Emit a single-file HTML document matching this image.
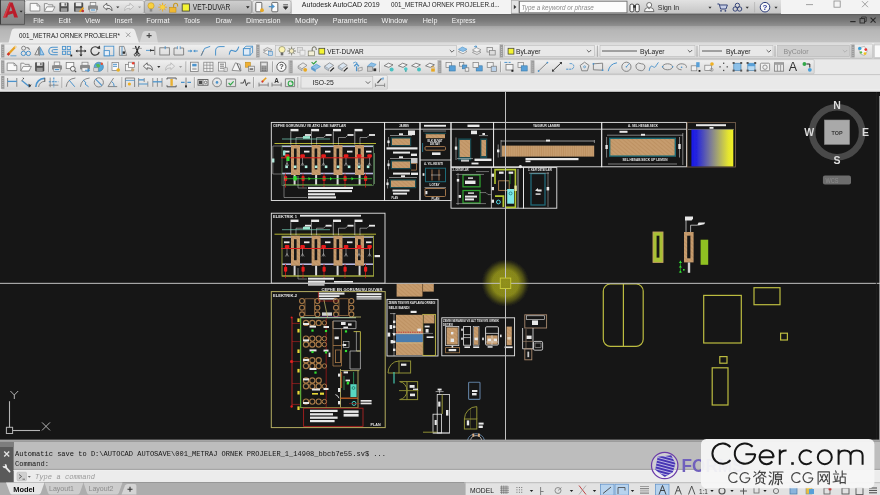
<!DOCTYPE html>
<html><head><meta charset="utf-8"><title>AutoCAD</title>
<style>html,body{margin:0;padding:0;background:#161616;overflow:hidden}svg{display:block}text{white-space:pre}</style>
</head><body>
<svg width="880" height="495" viewBox="0 0 880 495" font-family="'Liberation Sans', sans-serif">

<defs>
<linearGradient id="gQat" x1="0" y1="0" x2="0" y2="1"><stop offset="0" stop-color="#e2e2e2"/><stop offset="1" stop-color="#c4c4c4"/></linearGradient>
<linearGradient id="gQat2" x1="0" y1="0" x2="0" y2="1"><stop offset="0" stop-color="#ececec"/><stop offset="1" stop-color="#cfcfcf"/></linearGradient>
<linearGradient id="gQatD" x1="0" y1="0" x2="0" y2="1"><stop offset="0" stop-color="#cfcfcf"/><stop offset="1" stop-color="#b4b4b4"/></linearGradient>
<linearGradient id="gMenu" x1="0" y1="0" x2="0" y2="1"><stop offset="0" stop-color="#5a5a5a"/><stop offset="0.12" stop-color="#6c6c6c"/><stop offset="0.55" stop-color="#7a7a7a"/><stop offset="1" stop-color="#909090"/></linearGradient>
<linearGradient id="gTabs" x1="0" y1="0" x2="0" y2="1"><stop offset="0" stop-color="#a4a4a4"/><stop offset="0.25" stop-color="#b6b6b6"/><stop offset="1" stop-color="#c2c2c2"/></linearGradient>
<linearGradient id="gApp" x1="0" y1="0" x2="0" y2="1"><stop offset="0" stop-color="#a2a2a2"/><stop offset="0.5" stop-color="#8e8e8e"/><stop offset="1" stop-color="#848484"/></linearGradient>
<linearGradient id="gTb" x1="0" y1="0" x2="0" y2="1"><stop offset="0" stop-color="#f0f0f0"/><stop offset="1" stop-color="#d8d8d8"/></linearGradient>
<linearGradient id="gBY" x1="0" y1="0" x2="1" y2="0"><stop offset="0" stop-color="#1a1ae8"/><stop offset="0.12" stop-color="#2424dc"/><stop offset="0.5" stop-color="#86868e"/><stop offset="0.88" stop-color="#e4e430"/><stop offset="1" stop-color="#f2f226"/></linearGradient>
<radialGradient id="gGlow"><stop offset="0" stop-color="#96961a" stop-opacity="0.96"/><stop offset="0.55" stop-color="#90901a" stop-opacity="0.92"/><stop offset="0.78" stop-color="#7c7c1a" stop-opacity="0.55"/><stop offset="1" stop-color="#505018" stop-opacity="0"/></radialGradient>
<pattern id="wood" width="3" height="3" patternUnits="userSpaceOnUse" patternTransform="rotate(40)"><rect width="3" height="3" fill="#c69c6e"/><rect width="3" height="0.7" fill="#b98c5c"/></pattern>
<pattern id="woodv" width="2.2" height="4" patternUnits="userSpaceOnUse"><rect width="2.2" height="4" fill="#c69c6e"/><rect width="0.5" height="4" fill="#b78a5a"/></pattern>
<filter id="soft" x="0" y="0" width="880" height="495" filterUnits="userSpaceOnUse"><feGaussianBlur stdDeviation="0.38" edgeMode="duplicate"/></filter>
</defs>
<g filter="url(#soft)"><rect x="0.00" y="0.00" width="880.00" height="92.00" fill="#e6e6e6" />
<rect x="0.00" y="0.00" width="292.00" height="14.00" fill="url(#gQat)" />
<rect x="292.00" y="0.00" width="588.00" height="14.00" fill="#f3f3f3" />
<rect x="511.00" y="0.00" width="270.00" height="14.00" fill="url(#gQat)" />
<rect x="511.00" y="13.00" width="270.00" height="1.00" fill="#9a9a9a" />
<rect x="0.00" y="14.00" width="880.00" height="12.00" fill="url(#gMenu)" />
<rect x="0.00" y="26.00" width="880.00" height="17.00" fill="url(#gTabs)" />
<rect x="0.00" y="43.00" width="880.00" height="49.00" fill="#e9e9e9" />
<rect x="0.00" y="0.00" width="24.50" height="24.30" fill="url(#gApp)" stroke="#505050" stroke-width="0.8" />
<rect x="0.00" y="0.00" width="1.00" height="24.30" fill="#3c3c3c" />
<path d="M3.2,17.5 L9.2,2.6 L12.6,2.6 L18,17.5 L14.2,17.5 L13,13.6 L8,15.0 L7.1,17.5 Z M9.2,11.6 L12.2,10.8 L10.8,6.2 Z" fill="#bb1e2a" fill-rule="evenodd"/>
<path d="M3.2,17.5 L9.2,2.6 L10.6,2.6 L5.2,17.5 Z" fill="#d23a44" />
<path d="M19.6,10.8 l3,0 l-1.5,1.8 Z" fill="#222" />
<rect x="25.00" y="0.50" width="119.00" height="13.00" fill="url(#gQat2)" stroke="#a8a8a8" stroke-width="0.6" rx="2" />
<rect x="144.50" y="0.50" width="107.00" height="13.00" fill="url(#gQatD)" stroke="#8a8a8a" stroke-width="0.6" rx="1.5" />
<rect x="252.50" y="0.50" width="38.50" height="13.00" fill="url(#gQat2)" stroke="#a0a0a0" stroke-width="0.6" rx="2" />
<g transform="translate(35.00,7.20)"><path d="M-4.8,-3.8 L2,-3.8 L4.8,-1.2 L4.8,3.8 L-4.8,3.8 Z" fill="#fafafa" stroke="#7c7c7c" stroke-width="0.8" /><path d="M2,-3.8 L2,-1.2 L4.8,-1.2" fill="none" stroke="#7c7c7c" stroke-width="0.7" /></g>
<g transform="translate(49.40,7.20)"><path d="M-5,4.2 L-5,-3.6 L-2,-3.6 L-1,-2.4 L3.4,-2.4 L3.4,-0.4" fill="#f4f4f4" stroke="#7c7c7c" stroke-width="0.8" /><path d="M-5,4.2 L-2.6,-0.4 L5.6,-0.4 L3.2,4.2 Z" fill="#fafafa" stroke="#7c7c7c" stroke-width="0.8" /></g>
<g transform="translate(64.00,7.20)"><rect x="-4.60" y="-4.60" width="9.20" height="9.20" fill="#505050" rx="0.8" /><rect x="-2.80" y="-4.60" width="5.60" height="3.60" fill="#e8e8e8" /><rect x="-3.00" y="1.00" width="6.00" height="3.60" fill="#9a9a9a" /><rect x="0.60" y="-4.00" width="1.20" height="2.40" fill="#505050" /></g>
<g transform="translate(78.60,7.20)"><rect x="-4.60" y="-4.60" width="9.20" height="9.20" fill="#505050" rx="0.8" /><rect x="-2.80" y="-4.60" width="5.60" height="3.60" fill="#e8e8e8" /><rect x="-3.00" y="1.00" width="6.00" height="3.60" fill="#9a9a9a" /><path d="M1,4.6 L4.8,0.4" fill="none" stroke="#e8a020" stroke-width="1.8" /><circle cx="4.20" cy="3.80" r="1.30" fill="#c83030"/></g>
<g transform="translate(93.00,7.20)"><rect x="-2.80" y="-4.80" width="5.60" height="3.40" fill="#f4f4f4" stroke="#7c7c7c" stroke-width="0.7" /><rect x="-5.00" y="-1.60" width="10.00" height="4.60" fill="#8a8a8a" rx="1" /><rect x="-3.20" y="1.20" width="6.40" height="3.60" fill="#f4f4f4" stroke="#7c7c7c" stroke-width="0.6" /><rect x="-2.20" y="2.20" width="4.40" height="1.20" fill="#4b93cc" /></g>
<g transform="translate(107.60,7.20)"><path d="M-4.6,-0.6 L-0.8,-4 L-0.8,-2 Q4.6,-2 4.4,3.6 Q3.4,0.8 -0.8,1 L-0.8,2.8 Z" fill="#f0f0f0" stroke="#4a4a4a" stroke-width="0.8" /></g>
<g transform="translate(117.80,7.20)"><path d="M-1.6,-0.8 l3.2,0 l-1.6,1.9 Z" fill="#333" /></g>
<g transform="translate(129.00,7.20)"><path d="M4.6,-0.6 L0.8,-4 L0.8,-2 Q-4.6,-2 -4.4,3.6 Q-3.4,0.8 0.8,1 L0.8,2.8 Z" fill="#e8e8e8" stroke="#b4b4b4" stroke-width="0.8" /></g>
<g transform="translate(139.60,7.20)"><path d="M-1.6,-0.8 l3.2,0 l-1.6,1.9 Z" fill="#a0a0a0" /></g>
<g transform="translate(151.00,7.20)"><circle cx="0.00" cy="-1.40" r="3.10" fill="#f8d040" stroke="#c89820" stroke-width="0.6"/><rect x="-1.30" y="1.60" width="2.60" height="2.80" fill="#8a8a8a" /></g>
<g transform="translate(162.60,7.20)"><circle cx="0.00" cy="0.00" r="2.30" fill="#f8c830"/><line x1="0.00" y1="0.00" x2="4.40" y2="0.00" stroke="#e8a820" stroke-width="0.9" /><line x1="0.00" y1="0.00" x2="-4.40" y2="0.00" stroke="#e8a820" stroke-width="0.9" /><line x1="0.00" y1="0.00" x2="0.00" y2="4.40" stroke="#e8a820" stroke-width="0.9" /><line x1="0.00" y1="0.00" x2="0.00" y2="-4.40" stroke="#e8a820" stroke-width="0.9" /><line x1="0.00" y1="0.00" x2="3.08" y2="3.08" stroke="#e8a820" stroke-width="0.9" /><line x1="0.00" y1="0.00" x2="-3.08" y2="3.08" stroke="#e8a820" stroke-width="0.9" /><line x1="0.00" y1="0.00" x2="3.08" y2="-3.08" stroke="#e8a820" stroke-width="0.9" /><line x1="0.00" y1="0.00" x2="-3.08" y2="-3.08" stroke="#e8a820" stroke-width="0.9" /><circle cx="0.00" cy="0.00" r="2.10" fill="#f8d040"/></g>
<g transform="translate(173.00,7.80)"><rect x="-3.40" y="-0.40" width="6.40" height="4.80" fill="#f0b830" stroke="#b88410" stroke-width="0.5" /><path d="M0.6,-0.4 L0.6,-2.6 A2,2 0 0 1 4.6,-2.6 L4.6,-1.4" fill="none" stroke="#c89820" stroke-width="1.1" /></g>
<g transform="translate(185.80,7.50)"><rect x="-3.60" y="-3.60" width="7.20" height="7.20" fill="#f4f430" stroke="#4a4a3a" stroke-width="0.9" /></g>
<text x="192.80" y="10.20" font-size="8.2" fill="#1c1c1c" font-family="'Liberation Sans', sans-serif" textLength="37.50" lengthAdjust="spacingAndGlyphs" >VET-DUVAR</text>
<path d="M246,6.2 l3.6,0 l-1.8,2.2 Z" fill="#222" />
<g transform="translate(259.40,7.20)"><rect x="-3.60" y="-4.80" width="6.00" height="9.40" fill="#fafafa" stroke="#4a4a4a" stroke-width="0.8" rx="0.8" /><circle cx="2.60" cy="3.00" r="1.90" fill="#e8a820"/></g>
<g transform="translate(273.80,7.20)"><rect x="-2.00" y="-4.80" width="6.00" height="9.40" fill="#fafafa" stroke="#4a4a4a" stroke-width="0.8" rx="0.8" /><path d="M-5,-0.6 l5,0 M-2,-2.4 l2.2,1.8 l-2.2,1.8" fill="none" stroke="#4b93cc" stroke-width="1.2" /></g>
<g transform="translate(285.60,7.20)"><path d="M-2.4,-2.4 l4.8,0 M-2.2,-0.4 l4.4,0 l-2.2,2.6 Z" fill="#333" stroke="#333" stroke-width="0.8" /></g>
<text x="301.80" y="7.40" font-size="7.6" fill="#222" font-family="'Liberation Sans', sans-serif" textLength="78.00" lengthAdjust="spacingAndGlyphs" >Autodesk AutoCAD 2019</text>
<text x="391.00" y="7.40" font-size="7.6" fill="#222" font-family="'Liberation Sans', sans-serif" textLength="108.50" lengthAdjust="spacingAndGlyphs" >001_METRAJ ORNEK PROJELER.d...</text>
<rect x="511.50" y="0.60" width="7.00" height="12.60" fill="#e4e4e4" stroke="#a4a4a4" stroke-width="0.6" />
<path d="M513.8,4.8 l2.6,2.2 l-2.6,2.2 Z" fill="#333" />
<rect x="519.50" y="1.20" width="107.50" height="11.60" fill="#fcfcfc" stroke="#6e6e6e" stroke-width="0.9" />
<text x="521.40" y="9.50" font-size="7" fill="#8a8a8a" font-family="'Liberation Sans', sans-serif" textLength="72.50" lengthAdjust="spacingAndGlyphs" font-style="italic" >Type a keyword or phrase</text>
<g transform="translate(634.60,7.40)"><rect x="-4.60" y="-3.20" width="3.80" height="7.60" fill="#f8f8f8" stroke="#333" stroke-width="0.9" rx="1.4" /><rect x="0.80" y="-3.20" width="3.80" height="7.60" fill="#f8f8f8" stroke="#333" stroke-width="0.9" rx="1.4" /><rect x="-1.40" y="-2.20" width="2.80" height="2.60" fill="#333" /></g>
<g transform="translate(649.20,7.00)"><circle cx="0.00" cy="-2.00" r="2.50" fill="#f8f8f8" stroke="#555" stroke-width="0.8"/><path d="M-4.8,4.6 Q-4.6,0.8 -1.6,0.6 L0,1.8 L1.6,0.6 Q4.6,0.8 4.8,4.6 Z" fill="#f8f8f8" stroke="#555" stroke-width="0.8" /></g>
<text x="657.80" y="10.20" font-size="7.6" fill="#2a2a2a" font-family="'Liberation Sans', sans-serif" textLength="21.40" lengthAdjust="spacingAndGlyphs" >Sign In</text>
<g transform="translate(710.00,7.60)"><path d="M-1.6,-0.8 l3.2,0 l-1.6,1.9 Z" fill="#333" /></g>
<g transform="translate(722.80,7.40)"><path d="M-5.4,-3.4 l1.8,0 l1.4,5 l5.4,0 l1.4,-4 l-7.8,0" fill="#c8d0e8" stroke="#38477a" stroke-width="1.0" /><circle cx="-1.80" cy="3.40" r="0.90" fill="#38477a"/><circle cx="2.60" cy="3.40" r="0.90" fill="#38477a"/></g>
<g transform="translate(737.40,7.20)"><circle cx="0.00" cy="-1.80" r="2.20" fill="none" stroke="#38477a" stroke-width="1.0"/><circle cx="-2.20" cy="1.80" r="2.20" fill="none" stroke="#38477a" stroke-width="1.0"/><circle cx="2.20" cy="1.80" r="2.20" fill="none" stroke="#38477a" stroke-width="1.0"/></g>
<g transform="translate(747.20,7.60)"><path d="M-1.6,-0.8 l3.2,0 l-1.6,1.9 Z" fill="#333" /></g>
<line x1="754.60" y1="2.00" x2="754.60" y2="12.40" stroke="#aaa" stroke-width="0.6" />
<g transform="translate(765.00,7.20)"><circle cx="0.00" cy="0.00" r="4.80" fill="#f8f8f8" stroke="#2a3a78" stroke-width="1.0"/><text x="0.00" y="2.80" font-size="8" fill="#2a3a9a" font-family="'Liberation Sans', sans-serif" font-weight="bold" text-anchor="middle" >?</text></g>
<g transform="translate(776.00,7.60)"><path d="M-1.6,-0.8 l3.2,0 l-1.6,1.9 Z" fill="#333" /></g>
<line x1="806.00" y1="4.60" x2="813.00" y2="4.60" stroke="#8c8c8c" stroke-width="0.8" />
<rect x="834.00" y="1.00" width="6.20" height="6.20" fill="none" stroke="#8c8c8c" stroke-width="0.8" />
<path d="M862,1.2 l6,6 M868,1.2 l-6,6" fill="none" stroke="#8c8c8c" stroke-width="0.8" />
<text x="33.30" y="22.60" font-size="7.4" fill="#f4f4f4" font-family="'Liberation Sans', sans-serif" textLength="10.50" lengthAdjust="spacingAndGlyphs" >File</text>
<text x="58.50" y="22.60" font-size="7.4" fill="#f4f4f4" font-family="'Liberation Sans', sans-serif" textLength="12.10" lengthAdjust="spacingAndGlyphs" >Edit</text>
<text x="85.00" y="22.60" font-size="7.4" fill="#f4f4f4" font-family="'Liberation Sans', sans-serif" textLength="15.20" lengthAdjust="spacingAndGlyphs" >View</text>
<text x="114.60" y="22.60" font-size="7.4" fill="#f4f4f4" font-family="'Liberation Sans', sans-serif" textLength="17.60" lengthAdjust="spacingAndGlyphs" >Insert</text>
<text x="146.20" y="22.60" font-size="7.4" fill="#f4f4f4" font-family="'Liberation Sans', sans-serif" textLength="23.40" lengthAdjust="spacingAndGlyphs" >Format</text>
<text x="184.00" y="22.60" font-size="7.4" fill="#f4f4f4" font-family="'Liberation Sans', sans-serif" textLength="16.00" lengthAdjust="spacingAndGlyphs" >Tools</text>
<text x="215.80" y="22.60" font-size="7.4" fill="#f4f4f4" font-family="'Liberation Sans', sans-serif" textLength="15.80" lengthAdjust="spacingAndGlyphs" >Draw</text>
<text x="246.00" y="22.60" font-size="7.4" fill="#f4f4f4" font-family="'Liberation Sans', sans-serif" textLength="34.60" lengthAdjust="spacingAndGlyphs" >Dimension</text>
<text x="295.00" y="22.60" font-size="7.4" fill="#f4f4f4" font-family="'Liberation Sans', sans-serif" textLength="23.20" lengthAdjust="spacingAndGlyphs" >Modify</text>
<text x="332.70" y="22.60" font-size="7.4" fill="#f4f4f4" font-family="'Liberation Sans', sans-serif" textLength="34.50" lengthAdjust="spacingAndGlyphs" >Parametric</text>
<text x="381.50" y="22.60" font-size="7.4" fill="#f4f4f4" font-family="'Liberation Sans', sans-serif" textLength="26.10" lengthAdjust="spacingAndGlyphs" >Window</text>
<text x="422.70" y="22.60" font-size="7.4" fill="#f4f4f4" font-family="'Liberation Sans', sans-serif" textLength="14.70" lengthAdjust="spacingAndGlyphs" >Help</text>
<text x="451.80" y="22.60" font-size="7.4" fill="#f4f4f4" font-family="'Liberation Sans', sans-serif" textLength="23.80" lengthAdjust="spacingAndGlyphs" >Express</text>
<line x1="850.20" y1="21.60" x2="855.60" y2="21.60" stroke="#2a2a2a" stroke-width="1.2" />
<rect x="860.00" y="18.60" width="4.60" height="4.40" fill="none" stroke="#2a2a2a" stroke-width="0.9" />
<path d="M861.6,18.4 l0,-1.4 l4.6,0 l0,4.4 l-1.4,0" fill="none" stroke="#2a2a2a" stroke-width="0.8" />
<path d="M870.6,17.6 l5,5 M875.6,17.6 l-5,5" fill="none" stroke="#2a2a2a" stroke-width="1.1" />
<path d="M8.5,43 L11.5,31 Q12.2,28.6 14.6,28.6 L132,28.6 Q134.4,28.6 135.2,31 L139,43 Z" fill="#ececec" />
<text x="19.00" y="37.90" font-size="7.4" fill="#1a1a1a" font-family="'Liberation Sans', sans-serif" textLength="101.00" lengthAdjust="spacingAndGlyphs" >001_METRAJ ORNEK PROJELER*</text>
<path d="M126,32.6 l4.4,4.4 M130.4,32.6 l-4.4,4.4" fill="none" stroke="#9a9a9a" stroke-width="0.9" />
<path d="M139.5,43 L142.5,33 Q143.2,31 145.4,31 L153.6,31 Q155.8,31 156.2,33 L158,43 Z" fill="#d6d6d6" />
<path d="M146.6,35.6 l5,0 M149.1,33.1 l0,5" fill="none" stroke="#444" stroke-width="1.1" />
<rect x="0.00" y="42.60" width="880.00" height="0.90" fill="#f0f0f0" />
<rect x="1.50" y="44.00" width="255.00" height="14.40" fill="url(#gTb)" stroke="#bdbdbd" stroke-width="0.7" rx="1.2" />
<rect x="256.50" y="44.00" width="243.50" height="14.40" fill="url(#gTb)" stroke="#bdbdbd" stroke-width="0.7" rx="1.2" />
<rect x="500.00" y="44.00" width="351.00" height="14.40" fill="url(#gTb)" stroke="#bdbdbd" stroke-width="0.7" rx="1.2" />
<rect x="851.00" y="44.00" width="21.60" height="14.40" fill="url(#gTb)" stroke="#bdbdbd" stroke-width="0.7" rx="1.2" />
<rect x="873.60" y="44.00" width="10.40" height="14.40" fill="url(#gTb)" stroke="#bdbdbd" stroke-width="0.7" rx="1.2" />
<g transform="translate(2.80,51.00)"><rect x="-1.60" y="-6.40" width="3.20" height="12.80" fill="#9c9c9c" /><rect x="-0.60" y="-4.00" width="1.20" height="0.60" fill="#d8d8d8" /><rect x="-0.60" y="-2.00" width="1.20" height="0.60" fill="#d8d8d8" /><rect x="-0.60" y="0.00" width="1.20" height="0.60" fill="#d8d8d8" /><rect x="-0.60" y="2.00" width="1.20" height="0.60" fill="#d8d8d8" /><rect x="-0.60" y="4.00" width="1.20" height="0.60" fill="#d8d8d8" /></g>
<g transform="translate(12.40,51.00)"><path d="M-4.6,3.8 L3.2,-4.4" fill="none" stroke="#e8a020" stroke-width="2.2" /><path d="M-4.8,4 l1.8,-1.8" fill="none" stroke="#d03030" stroke-width="2.4" /><path d="M-2,4.8 l6,0" fill="none" stroke="#4b93cc" stroke-width="0.8" /><path d="M2.4,-3.6 l1.6,-1.4" fill="none" stroke="#f0d8a0" stroke-width="2" /></g>
<g transform="translate(25.80,51.00)"><circle cx="-2.40" cy="2.40" r="2.20" fill="none" stroke="#4b93cc" stroke-width="1.0"/><circle cx="2.60" cy="2.40" r="2.20" fill="none" stroke="#4b93cc" stroke-width="1.0"/><circle cx="-2.20" cy="-2.80" r="2.00" fill="none" stroke="#7c7c7c" stroke-width="0.9"/><path d="M0.6,-3.4 q3,-0.4 3,2.2" fill="none" stroke="#4a4a4a" stroke-width="0.8" /></g>
<g transform="translate(39.40,51.00)"><path d="M-0.8,3.8 L-4.6,3.8 L-0.8,-3.6 Z" fill="none" stroke="#7c7c7c" stroke-width="0.9" /><path d="M0.8,3.8 L4.6,3.8 L0.8,-3.6 Z" fill="#a8d0f0" stroke="#4b93cc" stroke-width="0.9" /><path d="M0,-5 l0,10" fill="none" stroke="#4a4a4a" stroke-width="0.5" /></g>
<g transform="translate(53.20,51.00)"><path d="M4.6,-3.8 L-0.6,-3.8 A3.8,3.8 0 0 0 -0.6,3.8 L4.6,3.8" fill="none" stroke="#4b93cc" stroke-width="1.1" /><path d="M4.6,-1.4 L0.2,-1.4 A1.4,1.4 0 0 0 0.2,1.4 L4.6,1.4" fill="none" stroke="#4b93cc" stroke-width="1.0" /></g>
<g transform="translate(67.00,51.00)"><rect x="-4.60" y="-4.60" width="3.20" height="3.20" fill="none" stroke="#4b93cc" stroke-width="0.9" /><rect x="-4.60" y="0.20" width="3.20" height="3.20" fill="none" stroke="#4b93cc" stroke-width="0.9" /><rect x="0.20" y="-4.60" width="3.20" height="3.20" fill="none" stroke="#4b93cc" stroke-width="0.9" /><rect x="0.20" y="0.20" width="3.20" height="3.20" fill="none" stroke="#4b93cc" stroke-width="0.9" /><rect x="3.40" y="3.60" width="1.80" height="1.80" fill="#222" /></g>
<g transform="translate(81.00,51.00)"><path d="M-5,0 L5,0 M0,-5 L0,5" fill="none" stroke="#333" stroke-width="1.1" /><path d="M-5.4,0 l1.8,-1.6 l0,3.2 Z M5.4,0 l-1.8,-1.6 l0,3.2 Z M0,-5.4 l-1.6,1.8 l3.2,0 Z M0,5.4 l-1.6,-1.8 l3.2,0 Z" fill="#333" /></g>
<g transform="translate(95.00,51.00)"><path d="M3.6,-2.4 A4.2,4.2 0 1 0 4.2,1" fill="none" stroke="#3c3c3c" stroke-width="1.2" /><path d="M1.6,-3.2 l3.6,1.4 l-0.2,-3.6 Z" fill="#3c3c3c" /></g>
<g transform="translate(109.00,51.00)"><rect x="-4.80" y="-4.80" width="9.60" height="9.60" fill="none" stroke="#4b93cc" stroke-width="0.9" /><rect x="-4.80" y="-0.40" width="5.20" height="5.20" fill="#e8f0f8" stroke="#4b93cc" stroke-width="0.9" /></g>
<g transform="translate(123.00,51.00)"><path d="M-3.6,4.4 L-3.6,-4.6 L1,-4.6 L3.6,4.4 Z" fill="none" stroke="#7c7c7c" stroke-width="0.8" /><path d="M-1,-4.6 L-1,4.4" fill="none" stroke="#4b93cc" stroke-width="0.9" /><rect x="-0.40" y="0.40" width="2.40" height="2.40" fill="#333" /></g>
<g transform="translate(137.00,51.00)"><path d="M-1.6,-5 L1.4,3 M2.4,-5 L-1.4,3" fill="none" stroke="#2c2c2c" stroke-width="1.3" /><path d="M-4.6,-2.6 l9.4,0" fill="none" stroke="#7c7c7c" stroke-width="0.7" /><circle cx="-1.60" cy="3.80" r="1.20" fill="none" stroke="#2c2c2c" stroke-width="0.8"/><circle cx="1.80" cy="3.80" r="1.20" fill="none" stroke="#2c2c2c" stroke-width="0.8"/></g>
<g transform="translate(151.00,51.00)"><path d="M-5,-0.6 l6,0" fill="none" stroke="#4b93cc" stroke-width="0.9" /><path d="M-1,-0.6 l4.4,0" fill="none" stroke="#333" stroke-width="1.1" /><path d="M3.8,-4.6 l0,8.6" fill="none" stroke="#7c7c7c" stroke-width="0.9" /><path d="M1,-0.6 l-2,-1.4 l0,2.8 Z" fill="#333" /></g>
<g transform="translate(164.60,51.00)"><rect x="-4.80" y="-3.20" width="9.60" height="7.20" fill="none" stroke="#7c7c7c" stroke-width="0.9" /><path d="M0.6,-4.8 l0,3" fill="none" stroke="#4b93cc" stroke-width="1.0" /></g>
<g transform="translate(178.80,51.00)"><path d="M-1.4,-3 L-4.8,-3 L-4.8,4 L4.8,4 L4.8,-3 L1.4,-3" fill="none" stroke="#7c7c7c" stroke-width="0.9" /><path d="M-1.4,-4.8 l0,3 M1.4,-4.8 l0,3" fill="none" stroke="#4b93cc" stroke-width="0.8" /></g>
<g transform="translate(192.80,51.00)"><path d="M-5,0 l4,0 M5,0 l-4,0" fill="none" stroke="#4b93cc" stroke-width="1.2" /><path d="M-0.4,0 l-2,-1.6 l0,3.2 Z M0.4,0 l2,-1.6 l0,3.2 Z" fill="#4b93cc" /></g>
<g transform="translate(205.60,51.00)"><path d="M-4.4,4.6 L-1,-2.6 L4.6,-4.6" fill="none" stroke="#4b93cc" stroke-width="1.0" /><path d="M-4.4,4.6 L-2.4,0" fill="none" stroke="#7c7c7c" stroke-width="0.9" /></g>
<g transform="translate(220.00,51.00)"><path d="M-4.4,4.6 L-4.4,0 Q-4.4,-4.4 0,-4.4 L4.6,-4.4" fill="none" stroke="#4b93cc" stroke-width="1.0" /></g>
<g transform="translate(234.00,51.00)"><path d="M-4.8,3.6 C-3,-7 1.4,7 4.8,-4.4" fill="none" stroke="#4b93cc" stroke-width="1.1" /></g>
<g transform="translate(248.00,51.00)"><rect x="-4.60" y="-2.40" width="6.60" height="6.60" fill="#e0ecf8" stroke="#4b93cc" stroke-width="1.0" /><path d="M-4.6,-2.4 l2.6,-2.4 l6.6,0 l0,6.6 l-2.6,2.4 M2,-2.4 l2.6,-2.4" fill="none" stroke="#4b93cc" stroke-width="0.9" /></g>
<g transform="translate(258.00,51.00)"><rect x="-1.60" y="-6.40" width="3.20" height="12.80" fill="#9c9c9c" /><rect x="-0.60" y="-4.00" width="1.20" height="0.60" fill="#d8d8d8" /><rect x="-0.60" y="-2.00" width="1.20" height="0.60" fill="#d8d8d8" /><rect x="-0.60" y="0.00" width="1.20" height="0.60" fill="#d8d8d8" /><rect x="-0.60" y="2.00" width="1.20" height="0.60" fill="#d8d8d8" /><rect x="-0.60" y="4.00" width="1.20" height="0.60" fill="#d8d8d8" /></g>
<g transform="translate(268.00,51.00)"><path d="M-4.6,-1 l4,-2.4 l4.6,2.2 l-4,2.4 Z" fill="#e4e4e4" stroke="#7c7c7c" stroke-width="0.6" /><path d="M-4.6,1.4 l4,-2.4 l4.6,2.2 l-4,2.4 Z" fill="#f4f4f4" stroke="#7c7c7c" stroke-width="0.6" /><rect x="0.60" y="0.60" width="4.00" height="4.00" fill="#c8d8e8" stroke="#4b93cc" stroke-width="0.6" /></g>
<rect x="275.60" y="45.30" width="181.00" height="11.40" fill="#e8e8e8" stroke="#b8b8b8" stroke-width="0.6" />
<g transform="translate(282.00,51.00)"><circle cx="0.00" cy="-1.40" r="3.10" fill="#fbf3b0" stroke="#8a8a6a" stroke-width="0.7"/><rect x="-1.30" y="1.60" width="2.60" height="2.80" fill="#6a6a6a" /></g>
<g transform="translate(291.60,51.00)"><line x1="0.00" y1="0.00" x2="4.40" y2="0.00" stroke="#707060" stroke-width="0.8" /><line x1="0.00" y1="0.00" x2="-4.40" y2="0.00" stroke="#707060" stroke-width="0.8" /><line x1="0.00" y1="0.00" x2="0.00" y2="4.40" stroke="#707060" stroke-width="0.8" /><line x1="0.00" y1="0.00" x2="0.00" y2="-4.40" stroke="#707060" stroke-width="0.8" /><line x1="0.00" y1="0.00" x2="3.08" y2="3.08" stroke="#707060" stroke-width="0.8" /><line x1="0.00" y1="0.00" x2="-3.08" y2="3.08" stroke="#707060" stroke-width="0.8" /><line x1="0.00" y1="0.00" x2="3.08" y2="-3.08" stroke="#707060" stroke-width="0.8" /><line x1="0.00" y1="0.00" x2="-3.08" y2="-3.08" stroke="#707060" stroke-width="0.8" /><circle cx="0.00" cy="0.00" r="2.30" fill="#f4ecc0" stroke="#707060" stroke-width="0.6"/></g>
<g transform="translate(301.00,51.00)"><rect x="-3.40" y="-3.60" width="5.00" height="5.00" fill="#e0e0e0" stroke="#b4b4b4" stroke-width="0.7" /><rect x="-1.00" y="-0.80" width="5.00" height="5.00" fill="#ececec" stroke="#b4b4b4" stroke-width="0.7" /></g>
<g transform="translate(311.60,51.40)"><rect x="-3.40" y="-0.40" width="6.40" height="4.80" fill="#f4f0d8" stroke="#6a6a5a" stroke-width="0.6" /><path d="M0.6,-0.4 L0.6,-2.6 A2,2 0 0 1 4.6,-2.6 L4.6,-1.4" fill="none" stroke="#6a6a5a" stroke-width="1.0" /></g>
<g transform="translate(321.80,51.20)"><rect x="-2.90" y="-2.90" width="5.80" height="5.80" fill="#f4f430" stroke="#4a4a3a" stroke-width="0.8" /></g>
<text x="327.20" y="53.60" font-size="7.4" fill="#1c1c1c" font-family="'Liberation Sans', sans-serif" textLength="36.40" lengthAdjust="spacingAndGlyphs" >VET-DUVAR</text>
<g transform="translate(452.00,51.00)"><path d="M-2.2,-1 L0,1.2 L2.2,-1" fill="none" stroke="#555" stroke-width="0.9" /></g>
<g transform="translate(463.00,51.00)"><path d="M-4.6,0.6 l4,-2.4 l4.6,2.2 l-4,2.4 Z" fill="#f0f0f0" stroke="#7c7c7c" stroke-width="0.6" /><path d="M-4.6,-1.6 l4,-2.4 l4.6,2.2 l-4,2.4 Z" fill="#8cc0e8" stroke="#4b93cc" stroke-width="0.6" /></g>
<g transform="translate(477.00,51.00)"><path d="M-4.6,1.4 l4,-2.4 l4.6,2.2 l-4,2.4 Z" fill="#e4e4e4" stroke="#7c7c7c" stroke-width="0.6" /><path d="M-4.6,-1 l4,-2.4 l4.6,2.2 l-4,2.4 Z" fill="#f4f4f4" stroke="#7c7c7c" stroke-width="0.6" /><path d="M-3,-4.4 l3,0 l-1.5,-1 M0,-4.4 l-1.5,1" fill="none" stroke="#4b93cc" stroke-width="0.8" /></g>
<g transform="translate(491.00,51.00)"><rect x="-4.00" y="-3.60" width="5.60" height="4.60" fill="#ececec" stroke="#7c7c7c" stroke-width="0.7" /><rect x="-1.40" y="-0.60" width="5.60" height="4.60" fill="#dcdcdc" stroke="#7c7c7c" stroke-width="0.7" /></g>
<g transform="translate(501.60,51.00)"><rect x="-1.60" y="-6.40" width="3.20" height="12.80" fill="#9c9c9c" /><rect x="-0.60" y="-4.00" width="1.20" height="0.60" fill="#d8d8d8" /><rect x="-0.60" y="-2.00" width="1.20" height="0.60" fill="#d8d8d8" /><rect x="-0.60" y="0.00" width="1.20" height="0.60" fill="#d8d8d8" /><rect x="-0.60" y="2.00" width="1.20" height="0.60" fill="#d8d8d8" /><rect x="-0.60" y="4.00" width="1.20" height="0.60" fill="#d8d8d8" /></g>
<rect x="504.60" y="45.30" width="90.00" height="11.40" fill="#e8e8e8" stroke="#b8b8b8" stroke-width="0.6" />
<g transform="translate(511.00,51.20)"><rect x="-2.90" y="-2.90" width="5.80" height="5.80" fill="#f4f430" stroke="#4a4a3a" stroke-width="0.8" /></g>
<text x="516.00" y="53.60" font-size="7.4" fill="#1c1c1c" font-family="'Liberation Sans', sans-serif" textLength="24.60" lengthAdjust="spacingAndGlyphs" >ByLayer</text>
<g transform="translate(589.00,51.00)"><path d="M-2.2,-1 L0,1.2 L2.2,-1" fill="none" stroke="#555" stroke-width="0.9" /></g>
<line x1="597.40" y1="45.60" x2="597.40" y2="56.80" stroke="#9a9a9a" stroke-width="0.8" />
<rect x="600.00" y="45.30" width="95.00" height="11.40" fill="#e8e8e8" stroke="#b8b8b8" stroke-width="0.6" />
<line x1="602.00" y1="51.00" x2="637.00" y2="51.00" stroke="#333" stroke-width="0.8" />
<text x="640.00" y="53.60" font-size="7.4" fill="#1c1c1c" font-family="'Liberation Sans', sans-serif" textLength="24.60" lengthAdjust="spacingAndGlyphs" >ByLayer</text>
<g transform="translate(690.00,51.00)"><path d="M-2.2,-1 L0,1.2 L2.2,-1" fill="none" stroke="#555" stroke-width="0.9" /></g>
<line x1="697.00" y1="45.60" x2="697.00" y2="56.80" stroke="#9a9a9a" stroke-width="0.8" />
<rect x="699.40" y="45.30" width="73.60" height="11.40" fill="#e8e8e8" stroke="#b8b8b8" stroke-width="0.6" />
<line x1="702.00" y1="51.00" x2="722.00" y2="51.00" stroke="#333" stroke-width="0.8" />
<text x="726.00" y="53.60" font-size="7.4" fill="#1c1c1c" font-family="'Liberation Sans', sans-serif" textLength="24.60" lengthAdjust="spacingAndGlyphs" >ByLayer</text>
<g transform="translate(768.80,51.00)"><path d="M-2.2,-1 L0,1.2 L2.2,-1" fill="none" stroke="#555" stroke-width="0.9" /></g>
<line x1="775.00" y1="45.60" x2="775.00" y2="56.80" stroke="#9a9a9a" stroke-width="0.8" />
<rect x="777.60" y="45.30" width="72.00" height="11.40" fill="#cfcfcf" stroke="#b8b8b8" stroke-width="0.6" />
<text x="783.60" y="53.60" font-size="7.4" fill="#8c8c8c" font-family="'Liberation Sans', sans-serif" textLength="25.00" lengthAdjust="spacingAndGlyphs" >ByColor</text>
<g transform="translate(845.00,51.00)"><path d="M-2.2,-1 L0,1.2 L2.2,-1" fill="none" stroke="#b0b0b0" stroke-width="0.9" /></g>
<g transform="translate(853.00,51.00)"><rect x="-1.60" y="-6.40" width="3.20" height="12.80" fill="#9c9c9c" /><rect x="-0.60" y="-4.00" width="1.20" height="0.60" fill="#d8d8d8" /><rect x="-0.60" y="-2.00" width="1.20" height="0.60" fill="#d8d8d8" /><rect x="-0.60" y="0.00" width="1.20" height="0.60" fill="#d8d8d8" /><rect x="-0.60" y="2.00" width="1.20" height="0.60" fill="#d8d8d8" /><rect x="-0.60" y="4.00" width="1.20" height="0.60" fill="#d8d8d8" /></g>
<g transform="translate(862.40,51.00)"><path d="M-4,-3 L2,-4.6 L5,0 L2,4.4 L-2,3 Z" fill="#f8f8f8" stroke="#888" stroke-width="0.5" /><circle cx="-2.60" cy="-2.60" r="1.70" fill="#38a0d8"/><circle cx="3.40" cy="-1.40" r="1.40" fill="#e83030"/><circle cx="2.60" cy="2.60" r="1.40" fill="#f0c020"/><circle cx="-1.40" cy="1.40" r="1.20" fill="#58b848"/></g>
<rect x="874.40" y="45.00" width="6.00" height="12.40" fill="#fafafa" stroke="#bbb" stroke-width="0.5" />
<rect x="1.50" y="59.60" width="287.50" height="14.40" fill="url(#gTb)" stroke="#bdbdbd" stroke-width="0.7" rx="1.2" />
<rect x="289.00" y="59.60" width="149.00" height="14.40" fill="url(#gTb)" stroke="#bdbdbd" stroke-width="0.7" rx="1.2" />
<rect x="438.00" y="59.60" width="93.00" height="14.40" fill="url(#gTb)" stroke="#bdbdbd" stroke-width="0.7" rx="1.2" />
<rect x="531.00" y="59.60" width="283.20" height="14.40" fill="url(#gTb)" stroke="#bdbdbd" stroke-width="0.7" rx="1.2" />
<g transform="translate(2.80,66.80)"><rect x="-1.60" y="-6.40" width="3.20" height="12.80" fill="#9c9c9c" /><rect x="-0.60" y="-4.00" width="1.20" height="0.60" fill="#d8d8d8" /><rect x="-0.60" y="-2.00" width="1.20" height="0.60" fill="#d8d8d8" /><rect x="-0.60" y="0.00" width="1.20" height="0.60" fill="#d8d8d8" /><rect x="-0.60" y="2.00" width="1.20" height="0.60" fill="#d8d8d8" /><rect x="-0.60" y="4.00" width="1.20" height="0.60" fill="#d8d8d8" /></g>
<g transform="translate(12.00,66.80)"><path d="M-4.8,-3.8 L2,-3.8 L4.8,-1.2 L4.8,3.8 L-4.8,3.8 Z" fill="#fafafa" stroke="#7c7c7c" stroke-width="0.8" /><path d="M2,-3.8 L2,-1.2 L4.8,-1.2" fill="none" stroke="#7c7c7c" stroke-width="0.7" /></g>
<g transform="translate(25.80,66.80)"><path d="M-5,4.2 L-5,-3.6 L-2,-3.6 L-1,-2.4 L3.4,-2.4 L3.4,-0.4" fill="#f4f4f4" stroke="#7c7c7c" stroke-width="0.8" /><path d="M-5,4.2 L-2.6,-0.4 L5.6,-0.4 L3.2,4.2 Z" fill="#fafafa" stroke="#7c7c7c" stroke-width="0.8" /></g>
<g transform="translate(39.70,66.80)"><rect x="-4.60" y="-4.60" width="9.20" height="9.20" fill="#505050" rx="0.8" /><rect x="-2.80" y="-4.60" width="5.60" height="3.60" fill="#e8e8e8" /><rect x="-3.00" y="1.00" width="6.00" height="3.60" fill="#9a9a9a" /><rect x="0.60" y="-4.00" width="1.20" height="2.40" fill="#505050" /></g>
<g transform="translate(48.60,66.80)"><path d="M0,-5.4 l0,10.8" fill="none" stroke="#8a8a8a" stroke-width="0.8" /><path d="M0.8,-5.4 l0,10.8" fill="none" stroke="#fafafa" stroke-width="0.6" /></g>
<g transform="translate(57.00,66.80)"><rect x="-2.80" y="-4.80" width="5.60" height="3.40" fill="#f4f4f4" stroke="#7c7c7c" stroke-width="0.7" /><rect x="-5.00" y="-1.60" width="10.00" height="4.60" fill="#8a8a8a" rx="1" /><rect x="-3.20" y="1.20" width="6.40" height="3.60" fill="#f4f4f4" stroke="#7c7c7c" stroke-width="0.6" /><rect x="-2.20" y="2.20" width="4.40" height="1.20" fill="#4b93cc" /></g>
<g transform="translate(70.80,66.80)"><rect x="-4.60" y="-4.40" width="7.60" height="6.20" fill="#fafafa" stroke="#7c7c7c" stroke-width="0.8" /><circle cx="2.00" cy="2.00" r="2.40" fill="#f4f4f4" stroke="#4a4a4a" stroke-width="0.8"/><path d="M3.8,3.8 l1.6,1.6" fill="none" stroke="#4a4a4a" stroke-width="1.1" /></g>
<g transform="translate(85.00,66.80)"><rect x="-3.00" y="-4.60" width="6.00" height="3.00" fill="#f4f4f4" stroke="#7c7c7c" stroke-width="0.7" /><rect x="-5.00" y="-1.80" width="10.00" height="4.40" fill="#8a8a8a" rx="1" /><rect x="-3.00" y="1.00" width="6.00" height="3.40" fill="#f4f4f4" stroke="#7c7c7c" stroke-width="0.6" /><path d="M0,3.4 l4,0 M2.6,1.8 l1.8,1.6 l-1.8,1.6" fill="none" stroke="#4b93cc" stroke-width="1.1" /></g>
<g transform="translate(98.80,66.80)"><circle cx="0.00" cy="0.00" r="4.60" fill="#58a8d8" stroke="#3a78a8" stroke-width="0.6"/><path d="M-3,-2 q2,-2 4,0 q1,2 -1,3 q-2,0 -3,-3" fill="#58b858" /><rect x="-5.00" y="1.00" width="4.40" height="3.80" fill="#d8d8d8" stroke="#7c7c7c" stroke-width="0.5" /><circle cx="3.00" cy="-3.00" r="1.20" fill="#e85030"/></g>
<g transform="translate(108.00,66.80)"><path d="M0,-5.4 l0,10.8" fill="none" stroke="#8a8a8a" stroke-width="0.8" /><path d="M0.8,-5.4 l0,10.8" fill="none" stroke="#fafafa" stroke-width="0.6" /></g>
<g transform="translate(115.60,66.80)"><rect x="-3.60" y="-4.40" width="6.40" height="8.00" fill="#fafafa" stroke="#7c7c7c" stroke-width="0.7" /><rect x="-2.60" y="-3.00" width="4.00" height="1.00" fill="#4b93cc" /><rect x="-2.60" y="-1.00" width="4.00" height="1.00" fill="#4b93cc" /><circle cx="2.60" cy="3.20" r="1.80" fill="#e8b020"/></g>
<g transform="translate(130.00,66.80)"><rect x="-4.40" y="-2.40" width="6.40" height="6.40" fill="#f4f4f4" stroke="#7c7c7c" stroke-width="0.7" /><rect x="-1.60" y="-4.60" width="6.00" height="5.40" fill="#fafafa" stroke="#7c7c7c" stroke-width="0.7" /><circle cx="3.20" cy="-3.60" r="1.30" fill="#e84030"/><circle cx="2.80" cy="3.00" r="1.60" fill="#c8a878"/></g>
<g transform="translate(138.80,66.80)"><path d="M0,-5.4 l0,10.8" fill="none" stroke="#8a8a8a" stroke-width="0.8" /><path d="M0.8,-5.4 l0,10.8" fill="none" stroke="#fafafa" stroke-width="0.6" /></g>
<g transform="translate(148.00,66.80)"><path d="M-4.6,-0.6 L-0.8,-4 L-0.8,-2 Q4.6,-2 4.4,3.6 Q3.4,0.8 -0.8,1 L-0.8,2.8 Z" fill="#f0f0f0" stroke="#4a4a4a" stroke-width="0.8" /></g>
<g transform="translate(158.80,66.80)"><path d="M-1.6,-0.8 l3.2,0 l-1.6,1.9 Z" fill="#333" /></g>
<g transform="translate(170.00,66.80)"><path d="M4.6,-0.6 L0.8,-4 L0.8,-2 Q-4.6,-2 -4.4,3.6 Q-3.4,0.8 0.8,1 L0.8,2.8 Z" fill="#e8e8e8" stroke="#b4b4b4" stroke-width="0.8" /></g>
<g transform="translate(180.60,66.80)"><path d="M-1.6,-0.8 l3.2,0 l-1.6,1.9 Z" fill="#a0a0a0" /></g>
<g transform="translate(186.00,66.80)"><path d="M0,-5.4 l0,10.8" fill="none" stroke="#8a8a8a" stroke-width="0.8" /><path d="M0.8,-5.4 l0,10.8" fill="none" stroke="#fafafa" stroke-width="0.6" /></g>
<g transform="translate(194.40,66.80)"><rect x="-3.80" y="-4.60" width="7.60" height="9.20" fill="#f4f4f4" stroke="#7c7c7c" stroke-width="0.8" /><rect x="-2.20" y="-3.00" width="4.40" height="2.60" fill="#4b93cc" /><rect x="-2.20" y="1.00" width="4.40" height="2.20" fill="#b8b8b8" /></g>
<g transform="translate(208.40,66.80)"><rect x="-4.60" y="-4.60" width="9.20" height="9.20" fill="#f0f0f0" stroke="#7c7c7c" stroke-width="0.7" /><path d="M-1.6,-4.6 l0,9.2 M1.6,-4.6 l0,9.2 M-4.6,-1.6 l9.2,0 M-4.6,1.6 l9.2,0" fill="none" stroke="#7c7c7c" stroke-width="0.6" /></g>
<g transform="translate(222.60,66.80)"><rect x="-4.00" y="-4.60" width="6.80" height="8.80" fill="#f4f4f4" stroke="#7c7c7c" stroke-width="0.7" /><path d="M-2.6,-2.6 l4,0 M-2.6,-0.6 l4,0 M-2.6,1.4 l4,0" fill="none" stroke="#4a4a4a" stroke-width="0.7" /><rect x="1.40" y="1.00" width="3.40" height="3.60" fill="#d8d8d8" stroke="#7c7c7c" stroke-width="0.5" /></g>
<g transform="translate(236.40,66.80)"><path d="M-4.4,3.6 L-1,-4 L3.6,-2.4 L4.6,4.2 Z" fill="#f4f4f4" stroke="#7c7c7c" stroke-width="0.8" /><path d="M0.6,-3.2 L3.8,3.8" fill="none" stroke="#4a4a4a" stroke-width="0.9" /></g>
<g transform="translate(250.00,66.80)"><rect x="-4.60" y="-4.60" width="5.00" height="5.00" fill="#f0b030" stroke="#b88410" stroke-width="0.5" /><rect x="-1.60" y="-0.60" width="6.00" height="5.00" fill="#e8e8e8" stroke="#7c7c7c" stroke-width="0.7" /><rect x="-0.40" y="1.40" width="3.60" height="1.80" fill="#7c7c7c" /></g>
<g transform="translate(264.00,66.80)"><rect x="-3.60" y="-4.80" width="7.20" height="9.60" fill="#b4b4b4" stroke="#7c7c7c" stroke-width="0.7" /><rect x="-2.40" y="-3.60" width="4.80" height="2.00" fill="#e8e8e8" /><rect x="-2.40" y="-0.40" width="1.20" height="1.20" fill="#6a6a6a" /><rect x="-2.40" y="1.40" width="1.20" height="1.20" fill="#6a6a6a" /><rect x="-2.40" y="3.00" width="1.20" height="1.20" fill="#6a6a6a" /><rect x="-0.60" y="-0.40" width="1.20" height="1.20" fill="#6a6a6a" /><rect x="-0.60" y="1.40" width="1.20" height="1.20" fill="#6a6a6a" /><rect x="-0.60" y="3.00" width="1.20" height="1.20" fill="#6a6a6a" /><rect x="1.20" y="-0.40" width="1.20" height="1.20" fill="#6a6a6a" /><rect x="1.20" y="1.40" width="1.20" height="1.20" fill="#6a6a6a" /><rect x="1.20" y="3.00" width="1.20" height="1.20" fill="#6a6a6a" /></g>
<g transform="translate(272.60,66.80)"><path d="M0,-5.4 l0,10.8" fill="none" stroke="#8a8a8a" stroke-width="0.8" /><path d="M0.8,-5.4 l0,10.8" fill="none" stroke="#fafafa" stroke-width="0.6" /></g>
<g transform="translate(281.40,66.80)"><circle cx="0.00" cy="0.00" r="4.60" fill="#f8f8f8" stroke="#4a4a4a" stroke-width="0.9"/><text x="0.00" y="2.60" font-size="7.4" fill="#4a4a4a" font-family="'Liberation Sans', sans-serif" font-weight="bold" text-anchor="middle" >?</text></g>
<g transform="translate(291.00,66.80)"><rect x="-1.60" y="-6.40" width="3.20" height="12.80" fill="#9c9c9c" /><rect x="-0.60" y="-4.00" width="1.20" height="0.60" fill="#d8d8d8" /><rect x="-0.60" y="-2.00" width="1.20" height="0.60" fill="#d8d8d8" /><rect x="-0.60" y="0.00" width="1.20" height="0.60" fill="#d8d8d8" /><rect x="-0.60" y="2.00" width="1.20" height="0.60" fill="#d8d8d8" /><rect x="-0.60" y="4.00" width="1.20" height="0.60" fill="#d8d8d8" /></g>
<g transform="translate(302.60,66.80)"><path d="M-4.6,-0.6 l5,-3.4 l4,2.6 l-5,3.4 Z" fill="#e8e8e8" stroke="#7c7c7c" stroke-width="0.7" /><path d="M-4.6,-0.6 l0,2 l4,2.6 l0,-2" fill="#c4c4c4" stroke="#7c7c7c" stroke-width="0.5" /><circle cx="2.60" cy="3.00" r="1.90" fill="#e8a820"/></g>
<g transform="translate(316.00,66.80)"><path d="M-4.6,0.4 l5,-3 l4,2.4 l-5,3 Z" fill="#8cc0e8" stroke="#4b93cc" stroke-width="0.7" /><path d="M-4.6,0.4 l0,2 l4,2.4 l0,-2" fill="#5a98c8" stroke="#4b93cc" stroke-width="0.5" /><path d="M-4.4,-4.6 l2,1.8 l3,-3" fill="none" stroke="#30a040" stroke-width="1.1" /></g>
<g transform="translate(329.20,66.80)"><path d="M-4.6,-0.6 l5,-3.4 l4,2.6 l-5,3.4 Z" fill="#d8e4f0" stroke="#7c7c7c" stroke-width="0.7" /><path d="M-4.6,-0.6 l0,2 l4,2.6 l0,-2" fill="#b4c4d4" stroke="#7c7c7c" stroke-width="0.5" /><path d="M1,4.6 l3.8,-3.8" fill="none" stroke="#222" stroke-width="1.3" /></g>
<g transform="translate(342.80,66.80)"><path d="M-4.6,-0.6 l5,-3.4 l4,2.6 l-5,3.4 Z" fill="#d8e4f0" stroke="#7c7c7c" stroke-width="0.7" /><path d="M-4.6,-0.6 l0,2 l4,2.6 l0,-2" fill="#b4c4d4" stroke="#7c7c7c" stroke-width="0.5" /><path d="M1,4.6 l3.8,-3.8" fill="none" stroke="#222" stroke-width="1.3" /></g>
<g transform="translate(357.60,66.80)"><path d="M-1,4.4 l0,-5 M-3.4,-0.6 l2.4,-2.4 l2.4,2.4" fill="none" stroke="#4b93cc" stroke-width="1.3" /><path d="M0.6,1.4 l4,-1 l0,3 l-4,1 Z" fill="#e0e0e0" stroke="#7c7c7c" stroke-width="0.6" /><path d="M-4.6,-3.6 q2.4,-2.4 4.6,0" fill="none" stroke="#4b93cc" stroke-width="0.8" /></g>
<g transform="translate(371.80,66.80)"><path d="M-4.6,-0.4 l4,-3.6 l5,1.6 l-4,3.6 Z" fill="#8cc0e8" stroke="#4b93cc" stroke-width="0.6" /><rect x="-4.20" y="0.00" width="5.00" height="4.40" fill="#c8c8c8" stroke="#7c7c7c" stroke-width="0.6" /><rect x="1.60" y="1.60" width="2.80" height="2.80" fill="#333" /></g>
<g transform="translate(379.60,66.80)"><path d="M0,-5.4 l0,10.8" fill="none" stroke="#8a8a8a" stroke-width="0.8" /><path d="M0.8,-5.4 l0,10.8" fill="none" stroke="#fafafa" stroke-width="0.6" /></g>
<g transform="translate(389.00,66.80)"><path d="M-4.8,-1 l4.2,-2.6 l4.6,1.6 l-4.2,2.6 Z" fill="#f4f4f4" stroke="#555" stroke-width="0.7" /><circle cx="2.60" cy="2.60" r="2.00" fill="#48c0c0"/></g>
<g transform="translate(403.20,66.80)"><path d="M-4.8,-1 l4.2,-2.6 l4.6,1.6 l-4.2,2.6 Z" fill="#f4f4f4" stroke="#555" stroke-width="0.7" /><circle cx="2.60" cy="2.20" r="1.80" fill="#48c8c8"/><rect x="1.80" y="3.40" width="1.60" height="1.60" fill="#48a8a8" /></g>
<g transform="translate(416.40,66.80)"><path d="M-4.8,-1 l4.2,-2.6 l4.6,1.6 l-4.2,2.6 Z" fill="#f4f4f4" stroke="#555" stroke-width="0.7" /><circle cx="2.60" cy="2.60" r="2.00" fill="#48c0c0"/></g>
<g transform="translate(430.40,66.80)"><path d="M-4.8,-1 l4.2,-2.6 l4.6,1.6 l-4.2,2.6 Z" fill="#f4f4f4" stroke="#555" stroke-width="0.7" /><rect x="0.80" y="1.80" width="3.60" height="3.00" fill="#e8a820" /><path d="M1.6,1.8 l0,-1.2 a1,1 0 0 1 2,0 l0,1.2" fill="none" stroke="#c88810" stroke-width="0.7" /></g>
<g transform="translate(439.80,66.80)"><rect x="-1.60" y="-6.40" width="3.20" height="12.80" fill="#9c9c9c" /><rect x="-0.60" y="-4.00" width="1.20" height="0.60" fill="#d8d8d8" /><rect x="-0.60" y="-2.00" width="1.20" height="0.60" fill="#d8d8d8" /><rect x="-0.60" y="0.00" width="1.20" height="0.60" fill="#d8d8d8" /><rect x="-0.60" y="2.00" width="1.20" height="0.60" fill="#d8d8d8" /><rect x="-0.60" y="4.00" width="1.20" height="0.60" fill="#d8d8d8" /></g>
<g transform="translate(450.60,66.80)"><rect x="-4.60" y="-4.40" width="5.60" height="5.00" fill="#f0f0f0" stroke="#7c7c7c" stroke-width="0.7" /><rect x="-1.40" y="-1.00" width="6.00" height="5.20" fill="#58a0d8" stroke="#3a78a8" stroke-width="0.6" /></g>
<g transform="translate(464.00,66.80)"><rect x="-4.60" y="-4.40" width="4.40" height="3.80" fill="#f0f0f0" stroke="#7c7c7c" stroke-width="0.7" /><rect x="-1.60" y="-1.80" width="4.40" height="3.80" fill="#58a0d8" stroke="#3a78a8" stroke-width="0.6" /><rect x="1.20" y="1.00" width="3.60" height="3.40" fill="#f0f0f0" stroke="#7c7c7c" stroke-width="0.7" /></g>
<g transform="translate(477.60,66.80)"><rect x="-1.40" y="-1.00" width="6.00" height="5.20" fill="#58a0d8" stroke="#3a78a8" stroke-width="0.6" /><rect x="-4.60" y="-4.40" width="5.60" height="5.00" fill="#f0f0f0" stroke="#7c7c7c" stroke-width="0.7" /></g>
<g transform="translate(491.80,66.80)"><rect x="-4.60" y="-4.40" width="6.00" height="5.00" fill="#f0f0f0" stroke="#7c7c7c" stroke-width="0.7" /><rect x="-0.60" y="-0.60" width="5.20" height="5.20" fill="#b8d0e8" stroke="#7c7c7c" stroke-width="0.7" /></g>
<g transform="translate(500.60,66.80)"><path d="M0,-5.4 l0,10.8" fill="none" stroke="#8a8a8a" stroke-width="0.8" /><path d="M0.8,-5.4 l0,10.8" fill="none" stroke="#fafafa" stroke-width="0.6" /></g>
<g transform="translate(509.00,66.80)"><rect x="-3.00" y="-2.40" width="7.00" height="5.60" fill="#f4f4f4" stroke="#7c7c7c" stroke-width="0.8" /><path d="M-4.6,-4.4 l3,0 M-0.4,-4.4 l2,0" fill="none" stroke="#4b93cc" stroke-width="1.0" /><rect x="2.40" y="3.00" width="2.00" height="2.00" fill="#222" /></g>
<g transform="translate(522.60,66.80)"><rect x="-4.60" y="-4.40" width="5.60" height="5.00" fill="#f0f0f0" stroke="#7c7c7c" stroke-width="0.7" /><rect x="-1.40" y="-1.00" width="6.00" height="5.20" fill="#58a0d8" stroke="#3a78a8" stroke-width="0.6" /></g>
<g transform="translate(532.80,66.80)"><rect x="-1.60" y="-6.40" width="3.20" height="12.80" fill="#9c9c9c" /><rect x="-0.60" y="-4.00" width="1.20" height="0.60" fill="#d8d8d8" /><rect x="-0.60" y="-2.00" width="1.20" height="0.60" fill="#d8d8d8" /><rect x="-0.60" y="0.00" width="1.20" height="0.60" fill="#d8d8d8" /><rect x="-0.60" y="2.00" width="1.20" height="0.60" fill="#d8d8d8" /><rect x="-0.60" y="4.00" width="1.20" height="0.60" fill="#d8d8d8" /></g>
<g transform="translate(543.00,66.80)"><path d="M-4.6,4.4 L4.6,-4.4" fill="none" stroke="#7c7c7c" stroke-width="0.9" /><circle cx="-4.40" cy="4.20" r="0.90" fill="#4b93cc"/><circle cx="4.40" cy="-4.20" r="0.90" fill="#4b93cc"/></g>
<g transform="translate(557.00,66.80)"><path d="M-4.6,4.4 L4.6,-4.4" fill="none" stroke="#333" stroke-width="1.0" /><path d="M-5,4.8 l0.2,-2.6 l2.4,2.4 Z M5,-4.8 l-0.2,2.6 l-2.4,-2.4 Z" fill="#333" /></g>
<g transform="translate(571.00,66.80)"><path d="M-4.8,2.4 L0,2.4 A2.8,2.8 0 0 0 0,-3.2 L-2,-3.2" fill="none" stroke="#4b93cc" stroke-width="1.0" stroke-dasharray="2.2,0.8"/></g>
<g transform="translate(584.60,66.80)"><path d="M0,-4.6 L4.4,-1.4 L2.8,4 L-2.8,4 L-4.4,-1.4 Z" fill="none" stroke="#7c7c7c" stroke-width="0.9" /><circle cx="0.00" cy="0.00" r="1.00" fill="none" stroke="#4b93cc" stroke-width="0.7"/></g>
<g transform="translate(598.00,66.80)"><path d="M-4.6,-3 L4.6,-3.6 L4.6,3.4 L-4.6,3 Z" fill="none" stroke="#7c7c7c" stroke-width="0.9" /><circle cx="-4.60" cy="-3.00" r="0.90" fill="#4b93cc"/><circle cx="4.60" cy="3.40" r="0.90" fill="#4b93cc"/></g>
<g transform="translate(612.60,66.80)"><path d="M-4.4,4.4 Q-3,-3 4.4,-4" fill="none" stroke="#4b93cc" stroke-width="1.0" /></g>
<g transform="translate(626.40,66.80)"><circle cx="0.00" cy="0.00" r="4.60" fill="none" stroke="#7c7c7c" stroke-width="0.9"/><path d="M0,0 l3,-3.4" fill="none" stroke="#4b93cc" stroke-width="0.8" /><circle cx="0.00" cy="0.00" r="0.80" fill="#4b93cc"/></g>
<g transform="translate(640.40,66.80)"><path d="M-4.4,-2 Q-2,-5 1,-3 Q5,-3 4.4,1 Q3,5 -1,3.6 Q-5,2.6 -4.4,-2 Z" fill="none" stroke="#7c7c7c" stroke-width="0.9" /></g>
<g transform="translate(654.00,66.80)"><path d="M-4.8,4 C-3,-6 0,4 2,-1 L4.4,-4.4" fill="none" stroke="#4b93cc" stroke-width="1.0" /></g>
<g transform="translate(667.60,66.80)"><ellipse cx="0" cy="0" rx="5" ry="3" fill="none" stroke="#7c7c7c" stroke-width="0.9"/><circle cx="-5.00" cy="0.00" r="0.80" fill="#4b93cc"/><circle cx="5.00" cy="0.00" r="0.80" fill="#4b93cc"/></g>
<g transform="translate(681.60,66.80)"><path d="M4.6,1 A4.8,3 0 1 0 0,3" fill="none" stroke="#7c7c7c" stroke-width="0.9" /><circle cx="0.00" cy="0.40" r="0.80" fill="#4b93cc"/></g>
<g transform="translate(695.60,66.80)"><rect x="-4.40" y="-1.00" width="5.60" height="5.00" fill="#f0f0f0" stroke="#7c7c7c" stroke-width="0.7" /><rect x="0.60" y="-4.60" width="3.40" height="5.00" fill="#58a0d8" /><rect x="3.00" y="3.20" width="1.80" height="1.80" fill="#222" /></g>
<g transform="translate(709.20,66.80)"><rect x="-4.40" y="-1.60" width="6.60" height="5.40" fill="#f0f0f0" stroke="#7c7c7c" stroke-width="0.7" /><circle cx="2.80" cy="-2.80" r="1.80" fill="#f0b020"/><circle cx="2.40" cy="3.00" r="1.50" fill="none" stroke="#7c7c7c" stroke-width="0.6"/></g>
<g transform="translate(723.60,66.80)"><rect x="-0.60" y="-4.20" width="1.30" height="1.30" fill="#4a4a4a" /><rect x="-0.60" y="3.00" width="1.30" height="1.30" fill="#4a4a4a" /><rect x="-4.20" y="-0.60" width="1.30" height="1.30" fill="#4a4a4a" /><rect x="3.00" y="-0.60" width="1.30" height="1.30" fill="#4a4a4a" /></g>
<g transform="translate(737.40,66.80)"><rect x="-3.60" y="-3.60" width="7.20" height="7.20" fill="#8cc0e8" stroke="#3a78a8" stroke-width="0.6" /><rect x="-4.80" y="-4.80" width="2.00" height="2.00" fill="#555" /><rect x="-4.80" y="2.80" width="2.00" height="2.00" fill="#555" /><rect x="2.80" y="-4.80" width="2.00" height="2.00" fill="#555" /><rect x="2.80" y="2.80" width="2.00" height="2.00" fill="#555" /></g>
<g transform="translate(751.40,66.80)"><rect x="-3.60" y="-3.60" width="7.20" height="7.20" fill="#b8d8f0" stroke="#3a78a8" stroke-width="0.6" /><rect x="-3.60" y="-3.60" width="7.20" height="3.00" fill="#58a0d8" /><rect x="-4.80" y="-4.80" width="2.00" height="2.00" fill="#555" /><rect x="-4.80" y="2.80" width="2.00" height="2.00" fill="#555" /><rect x="2.80" y="-4.80" width="2.00" height="2.00" fill="#555" /><rect x="2.80" y="2.80" width="2.00" height="2.00" fill="#555" /></g>
<g transform="translate(765.00,66.80)"><rect x="-4.60" y="-3.60" width="9.20" height="7.60" fill="#f0f0f0" stroke="#7c7c7c" stroke-width="0.8" rx="1" /><circle cx="0.00" cy="0.40" r="2.20" fill="none" stroke="#7c7c7c" stroke-width="0.8"/></g>
<g transform="translate(779.00,66.80)"><rect x="-4.60" y="-4.00" width="9.20" height="8.40" fill="#e8e8e8" stroke="#7c7c7c" stroke-width="0.8" /><rect x="-4.60" y="-4.00" width="9.20" height="2.00" fill="#a0a0a0" /><path d="M-1.6,-2 l0,6.4 M1.6,-2 l0,6.4" fill="none" stroke="#7c7c7c" stroke-width="0.7" /></g>
<g transform="translate(793.00,66.80)"><text x="0.00" y="4.60" font-size="12.5" fill="#333" font-family="'Liberation Sans', sans-serif" text-anchor="middle" >A</text></g>
<g transform="translate(807.00,66.80)"><circle cx="-2.60" cy="-2.80" r="1.90" fill="#30a848"/><circle cx="2.80" cy="3.00" r="1.90" fill="#48a0d8"/><path d="M-0.6,-2.8 l3.4,0 l0,3.6" fill="none" stroke="#222" stroke-width="1.0" /></g>
<rect x="1.50" y="75.20" width="385.90" height="14.40" fill="url(#gTb)" stroke="#bdbdbd" stroke-width="0.7" rx="1.2" />
<g transform="translate(2.80,82.40)"><rect x="-1.60" y="-6.40" width="3.20" height="12.80" fill="#9c9c9c" /><rect x="-0.60" y="-4.00" width="1.20" height="0.60" fill="#d8d8d8" /><rect x="-0.60" y="-2.00" width="1.20" height="0.60" fill="#d8d8d8" /><rect x="-0.60" y="0.00" width="1.20" height="0.60" fill="#d8d8d8" /><rect x="-0.60" y="2.00" width="1.20" height="0.60" fill="#d8d8d8" /><rect x="-0.60" y="4.00" width="1.20" height="0.60" fill="#d8d8d8" /></g>
<g transform="translate(12.20,82.40)"><path d="M-4.6,-4.4 l0,8.8 M4.6,-4.4 l0,8.8" fill="none" stroke="#7c7c7c" stroke-width="0.9" /><path d="M-4.6,-1 l9.2,0" fill="none" stroke="#4b93cc" stroke-width="1.3" /></g>
<g transform="translate(26.40,82.40)"><path d="M-4.6,-2 L3,4.4" fill="none" stroke="#4b93cc" stroke-width="1.3" /><path d="M-5,-1.2 l2.4,-3 M2.4,5 l2.6,-3.4" fill="none" stroke="#7c7c7c" stroke-width="0.8" /><path d="M-3.6,-4.6 l1.2,1 M3,4.4 l-0.6,-2.4 l2,1.4 Z" fill="#333" stroke="#333" stroke-width="0.9" /></g>
<g transform="translate(40.20,82.40)"><path d="M-4.4,4.6 A8.6,8.6 0 0 1 4.4,-4" fill="none" stroke="#4b93cc" stroke-width="1.6" /><path d="M-1.6,4.6 A6,6 0 0 1 4.4,-1" fill="none" stroke="#7c7c7c" stroke-width="0.9" /><path d="M4.6,-4.6 l0,4" fill="none" stroke="#333" stroke-width="0.8" /></g>
<g transform="translate(53.80,82.40)"><path d="M-3.6,-4.8 l0,9.6 M-5,2.8 l9.6,0" fill="none" stroke="#7c7c7c" stroke-width="0.8" /><path d="M0,-4.8 l0,9.6 M-5,-0.6 l9.6,0" fill="none" stroke="#4b93cc" stroke-width="1.1" stroke-dasharray="2,1"/></g>
<g transform="translate(62.00,82.40)"><path d="M0,-5.4 l0,10.8" fill="none" stroke="#8a8a8a" stroke-width="0.8" /><path d="M0.8,-5.4 l0,10.8" fill="none" stroke="#fafafa" stroke-width="0.6" /></g>
<g transform="translate(70.80,82.40)"><path d="M-4.6,4.4 Q-3.6,-3.6 4.6,-4.4" fill="none" stroke="#7c7c7c" stroke-width="0.9" /><path d="M-1.8,-2.4 L4,4.4" fill="none" stroke="#4b93cc" stroke-width="1.0" /></g>
<g transform="translate(85.00,82.40)"><path d="M-4.6,4.4 Q-3.6,-3.6 4.6,-4.4" fill="none" stroke="#7c7c7c" stroke-width="0.9" /><path d="M-1.8,-2.4 L1,0.4 L0,1.6 L3.6,4.4" fill="none" stroke="#4b93cc" stroke-width="1.0" /></g>
<g transform="translate(98.80,82.40)"><circle cx="0.00" cy="0.00" r="4.60" fill="none" stroke="#7c7c7c" stroke-width="0.9"/><path d="M-3.2,-3.2 L3.2,3.2" fill="none" stroke="#4b93cc" stroke-width="1.1" /></g>
<g transform="translate(112.60,82.40)"><path d="M-4.6,4.2 L4.6,4.2 M-4.6,4.2 L1,-4.4" fill="none" stroke="#7c7c7c" stroke-width="0.9" /><path d="M1.6,4.2 A6,6 0 0 0 -1,-1" fill="none" stroke="#4b93cc" stroke-width="1.0" /></g>
<g transform="translate(122.00,82.40)"><path d="M0,-5.4 l0,10.8" fill="none" stroke="#8a8a8a" stroke-width="0.8" /><path d="M0.8,-5.4 l0,10.8" fill="none" stroke="#fafafa" stroke-width="0.6" /></g>
<g transform="translate(130.00,82.40)"><path d="M-4.6,4.6 l0,-9 l9.2,0 l0,9" fill="none" stroke="#7c7c7c" stroke-width="0.9" /><circle cx="-0.60" cy="1.60" r="1.60" fill="#f0b020"/><path d="M-4.6,-2 l9.2,0" fill="none" stroke="#4b93cc" stroke-width="0.8" /></g>
<g transform="translate(143.20,82.40)"><path d="M-4.6,-4.4 l0,8.8 M4.6,-1 l0,5.4 M1,-4.4 l0,4" fill="none" stroke="#7c7c7c" stroke-width="0.8" /><path d="M-4.6,-2.6 l5.6,0 M-4.6,1.6 l9.2,0" fill="none" stroke="#4b93cc" stroke-width="1.2" /></g>
<g transform="translate(157.40,82.40)"><path d="M-4.6,-4.4 l0,8.8 M0,-4.4 l0,8.8 M4.6,-4.4 l0,8.8" fill="none" stroke="#7c7c7c" stroke-width="0.8" /><path d="M-4.6,-0.6 l9.2,0" fill="none" stroke="#4b93cc" stroke-width="1.3" /></g>
<g transform="translate(171.60,82.40)"><path d="M-4.6,-4.4 l9.2,0 M-4.6,4.4 l9.2,0" fill="none" stroke="#4a4a4a" stroke-width="0.9" /><rect x="-1.20" y="-3.40" width="2.40" height="6.80" fill="#e8b030" /><path d="M-4.6,-4.4 l0,1.6 M4.6,-4.4 l0,1.6 M-4.6,4.4 l0,-1.6 M4.6,4.4 l0,-1.6" fill="none" stroke="#4a4a4a" stroke-width="0.8" /></g>
<g transform="translate(186.00,82.40)"><path d="M-5,0 l3.6,0 M1.4,0 l3.6,0" fill="none" stroke="#4b93cc" stroke-width="1.2" /><path d="M0,-4.8 l0,9.6" fill="none" stroke="#7c7c7c" stroke-width="0.9" /><rect x="-1.00" y="3.00" width="2.00" height="2.00" fill="#333" /></g>
<g transform="translate(194.40,82.40)"><path d="M0,-5.4 l0,10.8" fill="none" stroke="#8a8a8a" stroke-width="0.8" /><path d="M0.8,-5.4 l0,10.8" fill="none" stroke="#fafafa" stroke-width="0.6" /></g>
<g transform="translate(203.00,82.40)"><rect x="-5.00" y="-2.80" width="10.00" height="5.60" fill="#f0f0f0" stroke="#4a4a4a" stroke-width="0.8" /><rect x="-4.00" y="-1.80" width="3.20" height="3.60" fill="#4a4a4a" /><path d="M0,-2.8 l0,5.6" fill="none" stroke="#4a4a4a" stroke-width="0.7" /><circle cx="2.60" cy="0.00" r="1.30" fill="none" stroke="#4a4a4a" stroke-width="0.7"/></g>
<g transform="translate(217.00,82.40)"><circle cx="0.00" cy="0.00" r="4.40" fill="none" stroke="#7c7c7c" stroke-width="0.9"/><circle cx="0.00" cy="0.00" r="1.30" fill="#4b93cc"/></g>
<g transform="translate(231.00,82.40)"><path d="M-4.6,-3.4 l9.2,0 l0,7.6 l-9.2,0 Z" fill="none" stroke="#7c7c7c" stroke-width="0.9" /><path d="M-2.4,0.6 l1.8,1.8 l3.2,-3.4" fill="none" stroke="#30a848" stroke-width="1.2" /></g>
<g transform="translate(245.40,82.40)"><path d="M-5,0.6 l3,0 l1.4,-3.6 l1.6,6.4 l1.2,-2.8 l2.8,0" fill="none" stroke="#4a4a4a" stroke-width="1.0" /></g>
<g transform="translate(253.60,82.40)"><path d="M0,-5.4 l0,10.8" fill="none" stroke="#8a8a8a" stroke-width="0.8" /><path d="M0.8,-5.4 l0,10.8" fill="none" stroke="#fafafa" stroke-width="0.6" /></g>
<g transform="translate(263.60,82.40)"><path d="M-4.6,4.2 l0,-4 M4.6,4.2 l0,-4 M-4.6,2.6 l9.2,0" fill="none" stroke="#7c7c7c" stroke-width="0.9" /><path d="M-1,-1 L2.6,-4.6" fill="none" stroke="#e8a020" stroke-width="1.6" /><circle cx="-1.20" cy="-0.80" r="1.10" fill="#d03030"/></g>
<g transform="translate(276.60,82.40)"><path d="M-4.6,4.2 l0,-4 M4.6,4.2 l0,-4 M-4.6,2.6 l9.2,0" fill="none" stroke="#7c7c7c" stroke-width="0.9" /><text x="0.00" y="0.60" font-size="6.4" fill="#333" font-family="'Liberation Sans', sans-serif" font-weight="bold" text-anchor="middle" >A</text></g>
<g transform="translate(290.00,82.40)"><path d="M-4.6,-3.6 l9.2,0 l0,7.8 l-9.2,0 Z" fill="none" stroke="#7c7c7c" stroke-width="0.9" /><circle cx="0.60" cy="1.00" r="2.40" fill="none" stroke="#30a848" stroke-width="1.1"/><path d="M2.4,-1.4 l1,2 l-2.2,0 Z" fill="#30a848" /></g>
<g transform="translate(298.00,82.40)"><path d="M0,-5.4 l0,10.8" fill="none" stroke="#8a8a8a" stroke-width="0.8" /><path d="M0.8,-5.4 l0,10.8" fill="none" stroke="#fafafa" stroke-width="0.6" /></g>
<rect x="301.00" y="76.70" width="71.80" height="11.40" fill="#e8e8e8" stroke="#b8b8b8" stroke-width="0.6" />
<text x="312.40" y="85.00" font-size="7.4" fill="#1c1c1c" font-family="'Liberation Sans', sans-serif" textLength="21.40" lengthAdjust="spacingAndGlyphs" >ISO-25</text>
<g transform="translate(368.00,82.40)"><path d="M-2.2,-1 L0,1.2 L2.2,-1" fill="none" stroke="#555" stroke-width="0.9" /></g>
<g transform="translate(380.00,82.40)"><path d="M-4.6,3 l9.2,0 M-4.6,1 l0,3.6 M4.6,1 l0,3.6" fill="none" stroke="#7c7c7c" stroke-width="0.8" /><path d="M-2.6,0.6 l4,-4.4" fill="none" stroke="#555" stroke-width="1.2" /><path d="M1,-3.6 l2.4,-1 l-0.6,2.4" fill="none" stroke="#4b93cc" stroke-width="0.8" /></g>
<rect x="0.00" y="58.40" width="880.00" height="0.90" fill="#c2c2c2" />
<rect x="0.00" y="74.20" width="880.00" height="0.90" fill="#c2c2c2" />
<rect x="0.00" y="89.60" width="880.00" height="1.20" fill="#f2f2f2" />
<rect x="0.00" y="90.80" width="880.00" height="1.40" fill="#b8b8b8" />
<rect x="0.00" y="92.00" width="880.00" height="348.00" fill="#161616" />
<rect x="0.00" y="92.00" width="880.00" height="1.20" fill="#0a0a0a" />
<g>
<circle cx="505.40" cy="283.00" r="24.00" fill="url(#gGlow)"/>
<rect x="271.30" y="122.40" width="113.30" height="78.10" fill="none" stroke="#e8e8e8" stroke-width="0.9" />
<text x="273.00" y="127.20" font-size="3.2" fill="#e8e8e8" font-family="'Liberation Sans', sans-serif" textLength="73.00" lengthAdjust="spacingAndGlyphs" font-weight="bold" >CEPHE GORUNUSU VE ATKI LINE SARTLAR</text>
<line x1="274.50" y1="143.50" x2="376.00" y2="143.50" stroke="#c8c83a" stroke-width="0.9" />
<rect x="282.00" y="145.50" width="91.00" height="1.60" fill="#b9b9e0" />
<rect x="282.00" y="172.70" width="91.00" height="1.60" fill="#b9b9e0" />
<rect x="282.00" y="145.50" width="91.60" height="40.00" fill="none" stroke="#6a9a6a" stroke-width="0.6" />
<rect x="291.00" y="145.00" width="9.00" height="30.00" fill="url(#wood)" />
<rect x="294.00" y="148.50" width="2.60" height="21.00" fill="#151515" />
<rect x="311.60" y="145.00" width="9.00" height="30.00" fill="url(#wood)" />
<rect x="314.60" y="148.50" width="2.60" height="21.00" fill="#151515" />
<rect x="333.50" y="145.00" width="9.00" height="30.00" fill="url(#wood)" />
<rect x="336.50" y="148.50" width="2.60" height="21.00" fill="#151515" />
<rect x="355.00" y="145.00" width="9.00" height="30.00" fill="url(#wood)" />
<rect x="358.00" y="148.50" width="2.60" height="21.00" fill="#151515" />
<line x1="290.80" y1="131.50" x2="290.80" y2="144.50" stroke="#e8e8e8" stroke-width="0.6" />
<rect x="290.50" y="128.90" width="8.00" height="2.40" fill="#e8e8e8" />
<path d="M296.0,144.5 L296.0,137.5 L303.0,137.5 L305.0,135.5" fill="none" stroke="#e8e8e8" stroke-width="0.5" />
<rect x="305.00" y="134.10" width="6.00" height="1.80" fill="#e8e8e8" />
<line x1="311.40" y1="131.50" x2="311.40" y2="144.50" stroke="#e8e8e8" stroke-width="0.6" />
<rect x="311.10" y="128.90" width="8.00" height="2.40" fill="#e8e8e8" />
<path d="M316.6,144.5 L316.6,137.5 L323.6,137.5 L325.6,135.5" fill="none" stroke="#e8e8e8" stroke-width="0.5" />
<rect x="325.60" y="134.10" width="6.00" height="1.80" fill="#e8e8e8" />
<line x1="333.30" y1="131.50" x2="333.30" y2="144.50" stroke="#e8e8e8" stroke-width="0.6" />
<rect x="333.00" y="128.90" width="8.00" height="2.40" fill="#e8e8e8" />
<path d="M338.5,144.5 L338.5,137.5 L345.5,137.5 L347.5,135.5" fill="none" stroke="#e8e8e8" stroke-width="0.5" />
<rect x="347.50" y="134.10" width="6.00" height="1.80" fill="#e8e8e8" />
<line x1="354.80" y1="131.50" x2="354.80" y2="144.50" stroke="#e8e8e8" stroke-width="0.6" />
<rect x="354.50" y="128.90" width="8.00" height="2.40" fill="#e8e8e8" />
<path d="M360.0,144.5 L360.0,137.5 L367.0,137.5 L369.0,135.5" fill="none" stroke="#e8e8e8" stroke-width="0.5" />
<rect x="369.00" y="134.10" width="6.00" height="1.80" fill="#e8e8e8" />
<line x1="282.00" y1="139.00" x2="330.00" y2="139.00" stroke="#78d8c0" stroke-width="0.7" />
<rect x="303.00" y="136.10" width="7.00" height="2.60" fill="#9ae8d0" />
<line x1="281.00" y1="157.80" x2="371.00" y2="157.80" stroke="#e02020" stroke-width="1.0" />
<rect x="284.80" y="154.20" width="4.60" height="3.40" fill="#e81c1c" rx="1" />
<line x1="287.00" y1="157.80" x2="287.00" y2="165.80" stroke="#c8c8c8" stroke-width="0.5" />
<path d="M285.4,165.8 L287.0,162.8 L288.6,165.8" fill="none" stroke="#c8c8c8" stroke-width="0.5" />
<rect x="300.30" y="154.20" width="4.60" height="3.40" fill="#e81c1c" rx="1" />
<line x1="302.50" y1="157.80" x2="302.50" y2="165.80" stroke="#c8c8c8" stroke-width="0.5" />
<path d="M300.9,165.8 L302.5,162.8 L304.1,165.8" fill="none" stroke="#c8c8c8" stroke-width="0.5" />
<rect x="321.30" y="154.20" width="4.60" height="3.40" fill="#e81c1c" rx="1" />
<line x1="323.50" y1="157.80" x2="323.50" y2="165.80" stroke="#c8c8c8" stroke-width="0.5" />
<path d="M321.9,165.8 L323.5,162.8 L325.1,165.8" fill="none" stroke="#c8c8c8" stroke-width="0.5" />
<rect x="343.80" y="154.20" width="4.60" height="3.40" fill="#e81c1c" rx="1" />
<line x1="346.00" y1="157.80" x2="346.00" y2="165.80" stroke="#c8c8c8" stroke-width="0.5" />
<path d="M344.4,165.8 L346.0,162.8 L347.6,165.8" fill="none" stroke="#c8c8c8" stroke-width="0.5" />
<rect x="356.80" y="154.20" width="4.60" height="3.40" fill="#e81c1c" rx="1" />
<line x1="359.00" y1="157.80" x2="359.00" y2="165.80" stroke="#c8c8c8" stroke-width="0.5" />
<path d="M357.4,165.8 L359.0,162.8 L360.6,165.8" fill="none" stroke="#c8c8c8" stroke-width="0.5" />
<rect x="367.30" y="154.20" width="4.60" height="3.40" fill="#e81c1c" rx="1" />
<line x1="369.50" y1="157.80" x2="369.50" y2="165.80" stroke="#c8c8c8" stroke-width="0.5" />
<path d="M367.9,165.8 L369.5,162.8 L371.1,165.8" fill="none" stroke="#c8c8c8" stroke-width="0.5" />
<rect x="284.00" y="150.70" width="5.50" height="1.80" fill="#e8e8e8" />
<rect x="304.00" y="150.70" width="5.50" height="1.80" fill="#e8e8e8" />
<rect x="325.00" y="150.70" width="5.50" height="1.80" fill="#e8e8e8" />
<rect x="347.00" y="150.70" width="5.50" height="1.80" fill="#e8e8e8" />
<rect x="366.00" y="150.70" width="5.50" height="1.80" fill="#e8e8e8" />
<rect x="285.30" y="165.50" width="2.60" height="2.60" fill="#b0f0e0" />
<rect x="293.80" y="165.50" width="2.60" height="2.60" fill="#b0f0e0" />
<rect x="304.80" y="165.50" width="2.60" height="2.60" fill="#b0f0e0" />
<rect x="314.80" y="165.50" width="2.60" height="2.60" fill="#b0f0e0" />
<rect x="324.80" y="165.50" width="2.60" height="2.60" fill="#b0f0e0" />
<rect x="336.80" y="165.50" width="2.60" height="2.60" fill="#b0f0e0" />
<rect x="347.80" y="165.50" width="2.60" height="2.60" fill="#b0f0e0" />
<rect x="357.80" y="165.50" width="2.60" height="2.60" fill="#b0f0e0" />
<rect x="366.80" y="165.50" width="2.60" height="2.60" fill="#b0f0e0" />
<rect x="272.00" y="158.50" width="2.40" height="4.00" fill="#b0f0e0" />
<rect x="283.00" y="150.50" width="2.40" height="5.00" fill="#90e0d0" />
<rect x="286.50" y="156.50" width="3.00" height="4.50" fill="#30e030" />
<line x1="285.50" y1="173.50" x2="285.50" y2="187.50" stroke="#c01818" stroke-width="0.9" />
<rect x="284.00" y="176.00" width="3.20" height="5.00" fill="#e81c1c" rx="1" />
<line x1="303.00" y1="173.50" x2="303.00" y2="187.50" stroke="#c01818" stroke-width="0.9" />
<rect x="301.50" y="176.00" width="3.20" height="5.00" fill="#e81c1c" rx="1" />
<line x1="324.00" y1="173.50" x2="324.00" y2="187.50" stroke="#c01818" stroke-width="0.9" />
<rect x="322.50" y="176.00" width="3.20" height="5.00" fill="#e81c1c" rx="1" />
<line x1="345.00" y1="173.50" x2="345.00" y2="187.50" stroke="#c01818" stroke-width="0.9" />
<rect x="343.50" y="176.00" width="3.20" height="5.00" fill="#e81c1c" rx="1" />
<line x1="365.50" y1="173.50" x2="365.50" y2="187.50" stroke="#c01818" stroke-width="0.9" />
<rect x="364.00" y="176.00" width="3.20" height="5.00" fill="#e81c1c" rx="1" />
<rect x="293.60" y="175.00" width="2.00" height="10.00" fill="#d8d8d8" />
<rect x="315.10" y="175.00" width="2.00" height="10.00" fill="#d8d8d8" />
<rect x="336.60" y="175.00" width="2.00" height="10.00" fill="#d8d8d8" />
<rect x="358.60" y="175.00" width="2.00" height="10.00" fill="#d8d8d8" />
<line x1="284.00" y1="178.70" x2="372.00" y2="178.70" stroke="#30c030" stroke-width="0.8" />
<line x1="284.00" y1="184.70" x2="372.00" y2="184.70" stroke="#70b040" stroke-width="0.8" />
<path d="M295,177.0 l2.2,1.7 l-2.2,1.7 Z" fill="#30e030" />
<path d="M308.5,177.0 l2.2,1.7 l-2.2,1.7 Z" fill="#30e030" />
<path d="M330,177.0 l2.2,1.7 l-2.2,1.7 Z" fill="#30e030" />
<path d="M351.5,177.0 l2.2,1.7 l-2.2,1.7 Z" fill="#30e030" />
<rect x="293.50" y="176.10" width="3.20" height="4.40" fill="#30e030" />
<rect x="308.00" y="186.90" width="45.00" height="2.10" fill="#e8e8e8" />
<rect x="308.00" y="190.05" width="44.00" height="2.10" fill="#e8e8e8" />
<rect x="308.00" y="193.20" width="27.00" height="2.10" fill="#e8e8e8" />
<rect x="308.00" y="196.35" width="28.00" height="2.10" fill="#e8e8e8" />
<path d="M284,174 L284,197.5 L307,197.5" fill="none" stroke="#c9c9c9" stroke-width="0.5" />
<path d="M298,176 L298,188 L307,188" fill="none" stroke="#c9c9c9" stroke-width="0.5" />
<path d="M272.8,146 L272.8,174 M272.8,146 l9,0 M272.8,174 l9,0" fill="none" stroke="#c9c9c9" stroke-width="0.5" />
<path d="M374.5,153 L374.5,184" fill="none" stroke="#70a070" stroke-width="0.7" />
<rect x="384.60" y="122.40" width="35.40" height="78.10" fill="none" stroke="#e8e8e8" stroke-width="0.9" />
<line x1="384.60" y1="129.20" x2="420.00" y2="129.20" stroke="#e8e8e8" stroke-width="0.8" />
<text x="399.00" y="127.40" font-size="3.2" fill="#e8e8e8" font-family="'Liberation Sans', sans-serif" textLength="10.00" lengthAdjust="spacingAndGlyphs" font-weight="bold" >JAMBS</text>
<rect x="390.80" y="137.30" width="20.40" height="8.90" fill="#1a4a50" />
<rect x="392.00" y="138.50" width="18.00" height="6.50" fill="url(#wood)" />
<line x1="390.00" y1="135.50" x2="412.00" y2="135.50" stroke="#e8e8e8" stroke-width="0.5" />
<rect x="399.00" y="133.30" width="4.00" height="1.80" fill="#e8e8e8" />
<line x1="388.60" y1="137.00" x2="388.60" y2="146.50" stroke="#e8e8e8" stroke-width="0.5" />
<rect x="387.40" y="140.50" width="2.20" height="2.60" fill="#e8e8e8" />
<rect x="390.80" y="160.30" width="20.40" height="8.90" fill="#1a4a50" />
<rect x="392.00" y="161.50" width="18.00" height="6.50" fill="url(#wood)" />
<line x1="390.00" y1="158.50" x2="412.00" y2="158.50" stroke="#e8e8e8" stroke-width="0.5" />
<rect x="399.00" y="156.30" width="4.00" height="1.80" fill="#e8e8e8" />
<line x1="388.60" y1="160.00" x2="388.60" y2="169.50" stroke="#e8e8e8" stroke-width="0.5" />
<rect x="387.40" y="163.50" width="2.20" height="2.60" fill="#e8e8e8" />
<rect x="389.80" y="179.30" width="26.40" height="8.90" fill="#1a4a50" />
<rect x="391.00" y="180.50" width="24.00" height="6.50" fill="url(#wood)" />
<line x1="389.00" y1="177.50" x2="417.00" y2="177.50" stroke="#e8e8e8" stroke-width="0.5" />
<rect x="401.00" y="175.30" width="4.00" height="1.80" fill="#e8e8e8" />
<line x1="387.60" y1="179.00" x2="387.60" y2="188.50" stroke="#e8e8e8" stroke-width="0.5" />
<rect x="386.40" y="182.50" width="2.20" height="2.60" fill="#e8e8e8" />
<rect x="386.50" y="147.30" width="31.00" height="2.20" fill="#e8e8e8" />
<rect x="393.00" y="151.60" width="17.00" height="2.00" fill="#e8e8e8" />
<rect x="411.00" y="153.60" width="6.00" height="2.40" fill="#e8e8e8" />
<rect x="408.00" y="130.50" width="7.00" height="4.60" fill="#e8e8e8" />
<rect x="411.00" y="158.00" width="6.50" height="5.40" fill="#c9c9c9" />
<rect x="393.00" y="172.60" width="17.00" height="2.00" fill="#e8e8e8" />
<rect x="411.00" y="172.60" width="7.00" height="2.40" fill="#e8e8e8" />
<rect x="392.50" y="189.60" width="17.00" height="1.90" fill="#e8e8e8" />
<rect x="393.00" y="192.70" width="14.00" height="1.90" fill="#e8e8e8" />
<text x="391.50" y="199.40" font-size="3" fill="#e8e8e8" font-family="'Liberation Sans', sans-serif" textLength="6.50" lengthAdjust="spacingAndGlyphs" font-weight="bold" >PLAN</text>
<path d="M411,163.5 l5.5,0 l0,6.6 l-5.5,0" fill="none" stroke="#b08050" stroke-width="0.8" />
<rect x="420.00" y="122.40" width="31.00" height="78.10" fill="none" stroke="#e8e8e8" stroke-width="0.9" />
<line x1="420.00" y1="129.20" x2="451.00" y2="129.20" stroke="#e8e8e8" stroke-width="0.8" />
<line x1="420.00" y1="160.00" x2="451.00" y2="160.00" stroke="#e8e8e8" stroke-width="0.8" />
<rect x="424.00" y="124.80" width="22.00" height="1.90" fill="#e8e8e8" />
<rect x="425.80" y="134.20" width="19.20" height="4.00" fill="url(#wood)" />
<rect x="424.60" y="132.80" width="21.60" height="1.10" fill="#1a4a50" />
<line x1="423.00" y1="131.00" x2="446.00" y2="131.00" stroke="#e8e8e8" stroke-width="0.5" />
<text x="427.50" y="142.00" font-size="3" fill="#e8e8e8" font-family="'Liberation Sans', sans-serif" textLength="15.00" lengthAdjust="spacingAndGlyphs" font-weight="bold" >ELK BUVAT</text>
<text x="430.00" y="145.00" font-size="3" fill="#e8e8e8" font-family="'Liberation Sans', sans-serif" textLength="10.00" lengthAdjust="spacingAndGlyphs" font-weight="bold" >DETAY</text>
<rect x="425.00" y="146.60" width="20.50" height="3.60" fill="none" stroke="#b08050" stroke-width="0.9" rx="1" />
<rect x="432.00" y="152.40" width="8.50" height="2.60" fill="#e8e8e8" />
<line x1="422.60" y1="143.00" x2="422.60" y2="152.00" stroke="#2a8aa0" stroke-width="0.8" />
<text x="424.00" y="165.40" font-size="3" fill="#e8e8e8" font-family="'Liberation Sans', sans-serif" textLength="19.00" lengthAdjust="spacingAndGlyphs" font-weight="bold" >4- YIL.KESITI</text>
<rect x="425.50" y="168.20" width="20.00" height="13.50" fill="none" stroke="#1e6a78" stroke-width="1.0" />
<line x1="432.00" y1="169.50" x2="432.00" y2="180.50" stroke="#b08050" stroke-width="0.9" />
<line x1="439.00" y1="169.50" x2="439.00" y2="180.50" stroke="#b08050" stroke-width="0.9" />
<line x1="431.00" y1="175.00" x2="440.50" y2="175.00" stroke="#e8e8e8" stroke-width="0.5" />
<rect x="422.60" y="173.20" width="1.80" height="2.60" fill="#e8e8e8" />
<text x="429.50" y="185.50" font-size="3" fill="#e8e8e8" font-family="'Liberation Sans', sans-serif" textLength="10.00" lengthAdjust="spacingAndGlyphs" font-weight="bold" >LOTAY</text>
<rect x="425.00" y="188.50" width="20.50" height="8.00" fill="none" stroke="#b08050" stroke-width="0.9" rx="1" />
<line x1="424.50" y1="187.60" x2="446.00" y2="187.60" stroke="#e8e8e8" stroke-width="0.5" />
<rect x="425.40" y="191.00" width="2.00" height="3.20" fill="#e8e8e8" />
<text x="431.50" y="199.60" font-size="3" fill="#e8e8e8" font-family="'Liberation Sans', sans-serif" textLength="8.00" lengthAdjust="spacingAndGlyphs" font-weight="bold" >PLAN</text>
<rect x="451.00" y="122.40" width="42.60" height="44.40" fill="none" stroke="#e8e8e8" stroke-width="0.9" />
<line x1="451.00" y1="129.20" x2="493.60" y2="129.20" stroke="#e8e8e8" stroke-width="0.8" />
<rect x="467.50" y="124.60" width="12.00" height="2.40" fill="#e8e8e8" />
<rect x="458.20" y="138.40" width="13.00" height="22.00" fill="#1a4a50" />
<rect x="459.60" y="140.00" width="10.40" height="17.00" fill="url(#wood)" />
<rect x="480.20" y="138.40" width="7.00" height="20.00" fill="#1a4a50" />
<rect x="481.40" y="140.00" width="4.60" height="16.00" fill="url(#wood)" />
<line x1="456.00" y1="137.50" x2="456.00" y2="160.00" stroke="#e8e8e8" stroke-width="0.5" />
<rect x="454.80" y="146.50" width="2.40" height="3.20" fill="#e8e8e8" />
<rect x="471.00" y="130.60" width="6.00" height="3.60" fill="#e8e8e8" />
<line x1="479.00" y1="135.60" x2="488.00" y2="135.60" stroke="#e8e8e8" stroke-width="0.5" />
<rect x="482.40" y="133.00" width="2.60" height="2.00" fill="#e8e8e8" />
<line x1="457.00" y1="158.60" x2="473.00" y2="158.60" stroke="#e8e8e8" stroke-width="0.5" />
<rect x="461.00" y="159.60" width="8.00" height="2.00" fill="#c9c9c9" />
<rect x="474.50" y="158.60" width="17.00" height="2.40" fill="#e8e8e8" />
<rect x="471.50" y="162.60" width="7.00" height="1.80" fill="#e8e8e8" />
<rect x="493.60" y="122.40" width="108.10" height="44.40" fill="none" stroke="#e8e8e8" stroke-width="0.9" />
<line x1="493.60" y1="129.20" x2="601.70" y2="129.20" stroke="#e8e8e8" stroke-width="0.8" />
<text x="533.00" y="127.30" font-size="3.2" fill="#e8e8e8" font-family="'Liberation Sans', sans-serif" textLength="27.00" lengthAdjust="spacingAndGlyphs" font-weight="bold" >YAGMUR LAMBRI</text>
<rect x="501.80" y="145.60" width="92.40" height="11.00" fill="url(#woodv)" />
<line x1="501.00" y1="141.00" x2="594.40" y2="141.00" stroke="#e8e8e8" stroke-width="0.6" />
<rect x="546.00" y="139.60" width="4.00" height="1.90" fill="#e8e8e8" />
<line x1="501.00" y1="140.00" x2="501.00" y2="157.00" stroke="#e8e8e8" stroke-width="0.5" />
<line x1="594.40" y1="140.00" x2="594.40" y2="143.00" stroke="#e8e8e8" stroke-width="0.5" />
<line x1="498.20" y1="144.50" x2="498.20" y2="157.50" stroke="#e8e8e8" stroke-width="0.5" />
<rect x="497.00" y="149.50" width="2.40" height="2.80" fill="#e8e8e8" />
<rect x="525.50" y="158.00" width="53.00" height="2.20" fill="#e8e8e8" />
<rect x="525.50" y="160.60" width="5.00" height="1.60" fill="#e8e8e8" />
<rect x="601.70" y="122.40" width="84.80" height="44.40" fill="none" stroke="#e8e8e8" stroke-width="0.9" />
<line x1="601.70" y1="129.20" x2="686.50" y2="129.20" stroke="#e8e8e8" stroke-width="0.8" />
<text x="628.00" y="127.30" font-size="3.2" fill="#e8e8e8" font-family="'Liberation Sans', sans-serif" textLength="30.00" lengthAdjust="spacingAndGlyphs" font-weight="bold" >A- SEL.HESAB.SECK</text>
<rect x="609.00" y="137.60" width="67.00" height="19.20" fill="#1e6a74" />
<rect x="610.40" y="139.00" width="64.20" height="16.40" fill="url(#wood)" />
<line x1="607.00" y1="135.20" x2="683.00" y2="135.20" stroke="#e8e8e8" stroke-width="0.5" />
<rect x="641.00" y="133.80" width="4.00" height="1.90" fill="#e8e8e8" />
<rect x="619.50" y="130.80" width="8.00" height="2.00" fill="#e8e8e8" />
<line x1="606.60" y1="137.00" x2="606.60" y2="157.50" stroke="#e8e8e8" stroke-width="0.5" />
<rect x="605.40" y="145.00" width="2.40" height="4.00" fill="#e8e8e8" />
<line x1="679.50" y1="137.00" x2="679.50" y2="157.50" stroke="#e8e8e8" stroke-width="0.5" />
<rect x="678.30" y="144.00" width="2.40" height="5.00" fill="#e8e8e8" />
<line x1="682.80" y1="133.00" x2="682.80" y2="165.00" stroke="#e8e8e8" stroke-width="0.5" />
<text x="622.50" y="160.80" font-size="3.2" fill="#e8e8e8" font-family="'Liberation Sans', sans-serif" textLength="45.00" lengthAdjust="spacingAndGlyphs" font-weight="bold" >SEL.HESAB.SECK UP LEMON</text>
<line x1="608.00" y1="164.00" x2="677.00" y2="164.00" stroke="#e8e8e8" stroke-width="0.5" />
<rect x="687.20" y="122.40" width="48.20" height="44.60" fill="none" stroke="#7e6650" stroke-width="0.8" />
<rect x="696.00" y="124.20" width="30.00" height="2.00" fill="#e8e8e8" />
<rect x="709.50" y="127.00" width="4.00" height="1.80" fill="#e8e8e8" />
<line x1="688.00" y1="129.40" x2="734.00" y2="129.40" stroke="#c9c9c9" stroke-width="0.5" />
<rect x="691.40" y="129.60" width="41.90" height="36.80" fill="url(#gBY)" />
<rect x="451.00" y="167.60" width="72.50" height="40.60" fill="none" stroke="#e8e8e8" stroke-width="0.9" />
<line x1="491.40" y1="167.60" x2="491.40" y2="208.20" stroke="#e8e8e8" stroke-width="0.7" />
<line x1="518.00" y1="169.00" x2="518.00" y2="208.20" stroke="#e8e8e8" stroke-width="0.7" />
<rect x="523.50" y="167.60" width="33.30" height="40.60" fill="none" stroke="#e8e8e8" stroke-width="0.9" />
<text x="452.50" y="170.80" font-size="3" fill="#e8e8e8" font-family="'Liberation Sans', sans-serif" textLength="16.00" lengthAdjust="spacingAndGlyphs" font-weight="bold" >2- DETAYLAR</text>
<text x="528.00" y="171.00" font-size="3" fill="#e8e8e8" font-family="'Liberation Sans', sans-serif" textLength="24.00" lengthAdjust="spacingAndGlyphs" font-weight="bold" >3- KAPI DETAYLARI</text>
<rect x="463.00" y="175.00" width="17.00" height="11.80" fill="none" stroke="#2fa02f" stroke-width="1.3" />
<rect x="463.00" y="190.50" width="17.00" height="12.50" fill="none" stroke="#2fa02f" stroke-width="1.3" />
<rect x="465.00" y="180.60" width="10.50" height="3.40" fill="#e8e8e8" />
<rect x="468.00" y="177.40" width="5.00" height="1.40" fill="#e8e8e8" />
<rect x="465.00" y="195.60" width="12.00" height="2.00" fill="#e8e8e8" />
<rect x="465.00" y="198.40" width="9.00" height="2.00" fill="#e8e8e8" />
<rect x="468.00" y="192.40" width="6.00" height="1.40" fill="#e8e8e8" />
<line x1="456.00" y1="174.40" x2="484.00" y2="174.40" stroke="#c9c9c9" stroke-width="0.5" />
<line x1="456.00" y1="203.60" x2="486.00" y2="203.60" stroke="#c9c9c9" stroke-width="0.5" />
<line x1="458.00" y1="173.00" x2="458.00" y2="205.00" stroke="#c9c9c9" stroke-width="0.5" />
<rect x="456.80" y="179.00" width="2.40" height="2.60" fill="#e8e8e8" />
<rect x="458.60" y="195.00" width="2.40" height="2.80" fill="#e8e8e8" />
<path d="M476,171.6 l13,0 M480,192.6 l6,0 l2,2 l3.4,0" fill="none" stroke="#c9c9c9" stroke-width="0.5" />
<path d="M495,184 L495,169.6 L515.4,169.6 L515.4,207.4 L506,207.4" fill="none" stroke="#b4c830" stroke-width="1.6" />
<path d="M495,196.2 L503.4,196.2 L503.4,207" fill="none" stroke="#b4c830" stroke-width="1.8" />
<rect x="498.60" y="180.80" width="10.60" height="9.60" fill="none" stroke="#b08050" stroke-width="0.9" />
<rect x="499.00" y="171.60" width="4.60" height="2.20" fill="#e8e8e8" />
<rect x="508.60" y="171.60" width="4.60" height="2.20" fill="#e8e8e8" />
<rect x="491.60" y="173.60" width="2.40" height="3.20" fill="#e8e8e8" />
<rect x="491.60" y="187.00" width="2.40" height="3.20" fill="#e8e8e8" />
<rect x="491.60" y="199.60" width="2.40" height="3.20" fill="#e8e8e8" />
<line x1="510.00" y1="174.00" x2="510.00" y2="184.00" stroke="#2fa02f" stroke-width="0.8" />
<rect x="507.20" y="189.00" width="6.80" height="14.70" fill="#7ee8e8" />
<circle cx="510.60" cy="193.40" r="1.50" fill="none" stroke="#1a7070" stroke-width="0.7"/>
<circle cx="498.40" cy="202.00" r="1.90" fill="none" stroke="#50d8e8" stroke-width="1.0"/>
<rect x="514.40" y="185.60" width="2.40" height="5.40" fill="#e8e8a0" />
<circle cx="520.40" cy="166.60" r="1.60" fill="#e8e8e8"/>
<rect x="531.00" y="173.60" width="14.00" height="31.40" fill="none" stroke="#1e6a78" stroke-width="1.3" />
<line x1="529.00" y1="173.20" x2="549.00" y2="173.20" stroke="#c9c9c9" stroke-width="0.5" />
<line x1="548.00" y1="172.00" x2="548.00" y2="207.00" stroke="#c9c9c9" stroke-width="0.5" />
<rect x="546.60" y="187.00" width="2.60" height="3.40" fill="#e8e8e8" />
<path d="M535,190.6 l3,-2.6 l0,1.6 l3.6,0 l0,2 l-3.6,0" fill="#e8e8e8" />
<rect x="535.60" y="193.40" width="5.00" height="1.40" fill="#e8e8e8" />
<rect x="271.30" y="213.20" width="113.70" height="70.00" fill="none" stroke="#e8e8e8" stroke-width="0.9" />
<text x="273.00" y="217.60" font-size="3.6" fill="#e8e8e8" font-family="'Liberation Sans', sans-serif" textLength="24.00" lengthAdjust="spacingAndGlyphs" font-weight="bold" >ELEKTRIK 1</text>
<rect x="300.00" y="214.80" width="61.00" height="1.80" fill="#e8e8e8" />
<line x1="274.50" y1="234.20" x2="376.00" y2="234.20" stroke="#c8c83a" stroke-width="0.9" />
<rect x="282.00" y="236.20" width="91.00" height="1.60" fill="#b9b9e0" />
<rect x="282.00" y="263.40" width="91.00" height="1.60" fill="#b9b9e0" />
<rect x="282.00" y="236.20" width="91.60" height="40.00" fill="none" stroke="#a8b040" stroke-width="0.8" />
<rect x="291.00" y="235.70" width="9.00" height="30.00" fill="url(#wood)" />
<rect x="294.00" y="239.20" width="2.60" height="21.00" fill="#151515" />
<rect x="311.60" y="235.70" width="9.00" height="30.00" fill="url(#wood)" />
<rect x="314.60" y="239.20" width="2.60" height="21.00" fill="#151515" />
<rect x="333.50" y="235.70" width="9.00" height="30.00" fill="url(#wood)" />
<rect x="336.50" y="239.20" width="2.60" height="21.00" fill="#151515" />
<rect x="355.00" y="235.70" width="9.00" height="30.00" fill="url(#wood)" />
<rect x="358.00" y="239.20" width="2.60" height="21.00" fill="#151515" />
<line x1="290.80" y1="222.20" x2="290.80" y2="235.20" stroke="#e8e8e8" stroke-width="0.6" />
<rect x="290.50" y="219.60" width="8.00" height="2.40" fill="#e8e8e8" />
<path d="M296.0,235.2 L296.0,228.2 L303.0,228.2 L305.0,226.2" fill="none" stroke="#e8e8e8" stroke-width="0.5" />
<rect x="305.00" y="224.80" width="6.00" height="1.80" fill="#e8e8e8" />
<line x1="311.40" y1="222.20" x2="311.40" y2="235.20" stroke="#e8e8e8" stroke-width="0.6" />
<rect x="311.10" y="219.60" width="8.00" height="2.40" fill="#e8e8e8" />
<path d="M316.6,235.2 L316.6,228.2 L323.6,228.2 L325.6,226.2" fill="none" stroke="#e8e8e8" stroke-width="0.5" />
<rect x="325.60" y="224.80" width="6.00" height="1.80" fill="#e8e8e8" />
<line x1="333.30" y1="222.20" x2="333.30" y2="235.20" stroke="#e8e8e8" stroke-width="0.6" />
<rect x="333.00" y="219.60" width="8.00" height="2.40" fill="#e8e8e8" />
<path d="M338.5,235.2 L338.5,228.2 L345.5,228.2 L347.5,226.2" fill="none" stroke="#e8e8e8" stroke-width="0.5" />
<rect x="347.50" y="224.80" width="6.00" height="1.80" fill="#e8e8e8" />
<line x1="354.80" y1="222.20" x2="354.80" y2="235.20" stroke="#e8e8e8" stroke-width="0.6" />
<rect x="354.50" y="219.60" width="8.00" height="2.40" fill="#e8e8e8" />
<path d="M360.0,235.2 L360.0,228.2 L367.0,228.2 L369.0,226.2" fill="none" stroke="#e8e8e8" stroke-width="0.5" />
<rect x="369.00" y="224.80" width="6.00" height="1.80" fill="#e8e8e8" />
<line x1="282.00" y1="229.70" x2="330.00" y2="229.70" stroke="#78d8c0" stroke-width="0.7" />
<rect x="303.00" y="226.80" width="7.00" height="2.60" fill="#9ae8d0" />
<line x1="281.00" y1="248.50" x2="371.00" y2="248.50" stroke="#e02020" stroke-width="1.0" />
<rect x="284.80" y="244.90" width="4.60" height="3.40" fill="#e81c1c" rx="1" />
<line x1="287.00" y1="248.50" x2="287.00" y2="256.50" stroke="#c8c8c8" stroke-width="0.5" />
<path d="M285.4,256.5 L287.0,253.5 L288.6,256.5" fill="none" stroke="#c8c8c8" stroke-width="0.5" />
<rect x="300.30" y="244.90" width="4.60" height="3.40" fill="#e81c1c" rx="1" />
<line x1="302.50" y1="248.50" x2="302.50" y2="256.50" stroke="#c8c8c8" stroke-width="0.5" />
<path d="M300.9,256.5 L302.5,253.5 L304.1,256.5" fill="none" stroke="#c8c8c8" stroke-width="0.5" />
<rect x="321.30" y="244.90" width="4.60" height="3.40" fill="#e81c1c" rx="1" />
<line x1="323.50" y1="248.50" x2="323.50" y2="256.50" stroke="#c8c8c8" stroke-width="0.5" />
<path d="M321.9,256.5 L323.5,253.5 L325.1,256.5" fill="none" stroke="#c8c8c8" stroke-width="0.5" />
<rect x="343.80" y="244.90" width="4.60" height="3.40" fill="#e81c1c" rx="1" />
<line x1="346.00" y1="248.50" x2="346.00" y2="256.50" stroke="#c8c8c8" stroke-width="0.5" />
<path d="M344.4,256.5 L346.0,253.5 L347.6,256.5" fill="none" stroke="#c8c8c8" stroke-width="0.5" />
<rect x="356.80" y="244.90" width="4.60" height="3.40" fill="#e81c1c" rx="1" />
<line x1="359.00" y1="248.50" x2="359.00" y2="256.50" stroke="#c8c8c8" stroke-width="0.5" />
<path d="M357.4,256.5 L359.0,253.5 L360.6,256.5" fill="none" stroke="#c8c8c8" stroke-width="0.5" />
<rect x="367.30" y="244.90" width="4.60" height="3.40" fill="#e81c1c" rx="1" />
<line x1="369.50" y1="248.50" x2="369.50" y2="256.50" stroke="#c8c8c8" stroke-width="0.5" />
<path d="M367.9,256.5 L369.5,253.5 L371.1,256.5" fill="none" stroke="#c8c8c8" stroke-width="0.5" />
<rect x="284.00" y="241.40" width="5.50" height="1.80" fill="#e8e8e8" />
<rect x="304.00" y="241.40" width="5.50" height="1.80" fill="#e8e8e8" />
<rect x="325.00" y="241.40" width="5.50" height="1.80" fill="#e8e8e8" />
<rect x="347.00" y="241.40" width="5.50" height="1.80" fill="#e8e8e8" />
<rect x="366.00" y="241.40" width="5.50" height="1.80" fill="#e8e8e8" />
<line x1="285.50" y1="264.20" x2="285.50" y2="278.20" stroke="#c01818" stroke-width="0.9" />
<rect x="284.00" y="266.70" width="3.20" height="5.00" fill="#e81c1c" rx="1" />
<line x1="303.00" y1="264.20" x2="303.00" y2="278.20" stroke="#c01818" stroke-width="0.9" />
<rect x="301.50" y="266.70" width="3.20" height="5.00" fill="#e81c1c" rx="1" />
<line x1="324.00" y1="264.20" x2="324.00" y2="278.20" stroke="#c01818" stroke-width="0.9" />
<rect x="322.50" y="266.70" width="3.20" height="5.00" fill="#e81c1c" rx="1" />
<line x1="345.00" y1="264.20" x2="345.00" y2="278.20" stroke="#c01818" stroke-width="0.9" />
<rect x="343.50" y="266.70" width="3.20" height="5.00" fill="#e81c1c" rx="1" />
<line x1="365.50" y1="264.20" x2="365.50" y2="278.20" stroke="#c01818" stroke-width="0.9" />
<rect x="364.00" y="266.70" width="3.20" height="5.00" fill="#e81c1c" rx="1" />
<rect x="293.60" y="265.70" width="2.00" height="10.00" fill="#d8d8d8" />
<rect x="315.10" y="265.70" width="2.00" height="10.00" fill="#d8d8d8" />
<rect x="336.60" y="265.70" width="2.00" height="10.00" fill="#d8d8d8" />
<rect x="358.60" y="265.70" width="2.00" height="10.00" fill="#d8d8d8" />
<line x1="282.00" y1="275.80" x2="373.60" y2="275.80" stroke="#a8b040" stroke-width="0.9" />
<rect x="308.00" y="277.70" width="26.00" height="2.00" fill="#e8e8e8" />
<rect x="308.00" y="280.60" width="17.00" height="2.20" fill="#e8e8e8" />
<rect x="308.00" y="284.20" width="16.50" height="1.40" fill="#e8e8e8" />
<rect x="334.00" y="281.00" width="19.00" height="1.60" fill="#e8e8e8" />
<path d="M298,268 L298,279 L307,279" fill="none" stroke="#c9c9c9" stroke-width="0.5" />
<rect x="374.60" y="255.00" width="5.40" height="2.20" fill="#e8e8e8" />
<text x="321.50" y="291.00" font-size="3.6" fill="#e8e8e8" font-family="'Liberation Sans', sans-serif" textLength="61.00" lengthAdjust="spacingAndGlyphs" font-weight="bold" >CEPHE EN GORUNUSU DUVAR</text>
<rect x="271.30" y="291.60" width="113.90" height="136.00" fill="none" stroke="#b4ae62" stroke-width="1.0" />
<text x="273.00" y="297.20" font-size="3.4" fill="#e8e8e8" font-family="'Liberation Sans', sans-serif" textLength="24.00" lengthAdjust="spacingAndGlyphs" font-weight="bold" >ELEKTRIK-2</text>
<rect x="318.50" y="292.60" width="26.00" height="2.00" fill="#e8e8e8" />
<rect x="318.50" y="295.20" width="21.00" height="1.80" fill="#e8e8e8" />
<rect x="318.50" y="297.80" width="18.00" height="1.80" fill="#e8e8e8" />
<rect x="356.50" y="293.20" width="25.00" height="1.90" fill="#e8e8e8" />
<rect x="356.50" y="295.80" width="25.00" height="1.90" fill="#e8e8e8" />
<rect x="356.50" y="298.20" width="25.00" height="1.40" fill="#c9c9c9" />
<path d="M318.4,291.8 L318.4,301 L343,301 L340,316" fill="none" stroke="#b82020" stroke-width="0.7" />
<circle cx="302.00" cy="301.00" r="2.45" fill="none" stroke="#a87a48" stroke-width="1.1"/>
<circle cx="317.40" cy="301.00" r="2.45" fill="none" stroke="#a87a48" stroke-width="1.1"/>
<circle cx="336.00" cy="301.00" r="2.45" fill="none" stroke="#a87a48" stroke-width="1.1"/>
<circle cx="351.40" cy="301.00" r="2.45" fill="none" stroke="#a87a48" stroke-width="1.1"/>
<circle cx="302.00" cy="307.70" r="2.45" fill="none" stroke="#a87a48" stroke-width="1.1"/>
<circle cx="317.40" cy="307.70" r="2.45" fill="none" stroke="#a87a48" stroke-width="1.1"/>
<circle cx="336.00" cy="307.70" r="2.45" fill="none" stroke="#a87a48" stroke-width="1.1"/>
<circle cx="351.40" cy="307.70" r="2.45" fill="none" stroke="#a87a48" stroke-width="1.1"/>
<circle cx="302.00" cy="314.30" r="2.45" fill="none" stroke="#a87a48" stroke-width="1.1"/>
<circle cx="317.40" cy="314.30" r="2.45" fill="none" stroke="#a87a48" stroke-width="1.1"/>
<circle cx="336.00" cy="314.30" r="2.45" fill="none" stroke="#a87a48" stroke-width="1.1"/>
<circle cx="351.40" cy="314.30" r="2.45" fill="none" stroke="#a87a48" stroke-width="1.1"/>
<rect x="305.00" y="298.80" width="9.40" height="16.80" fill="#151515" stroke="#a87a48" stroke-width="0.7" />
<rect x="339.00" y="298.80" width="9.40" height="16.80" fill="#151515" stroke="#a87a48" stroke-width="0.7" />
<rect x="322.00" y="312.40" width="10.00" height="3.40" fill="#d0d0d0" />
<line x1="320.00" y1="317.00" x2="340.00" y2="317.00" stroke="#8030a0" stroke-width="0.8" />
<path d="M324,300 L327.5,317" fill="none" stroke="#b4ae62" stroke-width="0.8" />
<line x1="300.60" y1="317.40" x2="300.60" y2="408.00" stroke="#58a838" stroke-width="1.3" />
<line x1="300.60" y1="317.60" x2="356.00" y2="317.60" stroke="#9ab89a" stroke-width="1.2" />
<line x1="352.00" y1="317.00" x2="361.00" y2="317.00" stroke="#b4ae62" stroke-width="0.9" />
<line x1="292.00" y1="317.00" x2="292.00" y2="407.00" stroke="#c02020" stroke-width="0.9" />
<line x1="326.20" y1="318.00" x2="326.20" y2="408.00" stroke="#a01818" stroke-width="0.8" />
<circle cx="291.60" cy="361.50" r="1.60" fill="#e02020"/>
<circle cx="291.60" cy="406.50" r="1.20" fill="#e02020"/>
<circle cx="291.60" cy="317.50" r="1.00" fill="#e02020"/>
<rect x="297.40" y="318.40" width="2.20" height="3.60" fill="#e8d838" />
<rect x="297.40" y="328.90" width="2.20" height="3.60" fill="#e8d838" />
<rect x="297.40" y="349.40" width="2.20" height="3.60" fill="#e8d838" />
<rect x="297.40" y="368.90" width="2.20" height="3.60" fill="#e8d838" />
<rect x="297.40" y="390.90" width="2.20" height="3.60" fill="#e8d838" />
<rect x="297.40" y="406.40" width="2.20" height="3.60" fill="#e8d838" />
<line x1="292.00" y1="323.40" x2="300.00" y2="323.40" stroke="#c02020" stroke-width="0.6" />
<line x1="292.00" y1="341.60" x2="300.00" y2="341.60" stroke="#c02020" stroke-width="0.6" />
<line x1="292.00" y1="361.60" x2="300.00" y2="361.60" stroke="#c02020" stroke-width="0.6" />
<line x1="292.00" y1="383.60" x2="300.00" y2="383.60" stroke="#c02020" stroke-width="0.6" />
<line x1="292.00" y1="404.40" x2="300.00" y2="404.40" stroke="#c02020" stroke-width="0.6" />
<circle cx="306.00" cy="322.90" r="2.60" fill="none" stroke="#a87a48" stroke-width="1.15"/>
<circle cx="312.30" cy="322.90" r="2.60" fill="none" stroke="#a87a48" stroke-width="1.15"/>
<circle cx="318.70" cy="322.90" r="2.60" fill="none" stroke="#a87a48" stroke-width="1.15"/>
<circle cx="306.00" cy="338.60" r="2.60" fill="none" stroke="#a87a48" stroke-width="1.15"/>
<circle cx="312.30" cy="338.60" r="2.60" fill="none" stroke="#a87a48" stroke-width="1.15"/>
<circle cx="318.70" cy="338.60" r="2.60" fill="none" stroke="#a87a48" stroke-width="1.15"/>
<circle cx="306.00" cy="344.50" r="2.60" fill="none" stroke="#a87a48" stroke-width="1.15"/>
<circle cx="312.30" cy="344.50" r="2.60" fill="none" stroke="#a87a48" stroke-width="1.15"/>
<circle cx="318.70" cy="344.50" r="2.60" fill="none" stroke="#a87a48" stroke-width="1.15"/>
<circle cx="306.00" cy="360.20" r="2.60" fill="none" stroke="#a87a48" stroke-width="1.15"/>
<circle cx="312.30" cy="360.20" r="2.60" fill="none" stroke="#a87a48" stroke-width="1.15"/>
<circle cx="318.70" cy="360.20" r="2.60" fill="none" stroke="#a87a48" stroke-width="1.15"/>
<circle cx="306.00" cy="366.00" r="2.60" fill="none" stroke="#a87a48" stroke-width="1.15"/>
<circle cx="312.30" cy="366.00" r="2.60" fill="none" stroke="#a87a48" stroke-width="1.15"/>
<circle cx="318.70" cy="366.00" r="2.60" fill="none" stroke="#a87a48" stroke-width="1.15"/>
<circle cx="306.00" cy="380.40" r="2.60" fill="none" stroke="#a87a48" stroke-width="1.15"/>
<circle cx="312.30" cy="380.40" r="2.60" fill="none" stroke="#a87a48" stroke-width="1.15"/>
<circle cx="318.70" cy="380.40" r="2.60" fill="none" stroke="#a87a48" stroke-width="1.15"/>
<circle cx="306.00" cy="386.20" r="2.60" fill="none" stroke="#a87a48" stroke-width="1.15"/>
<circle cx="312.30" cy="386.20" r="2.60" fill="none" stroke="#a87a48" stroke-width="1.15"/>
<circle cx="318.70" cy="386.20" r="2.60" fill="none" stroke="#a87a48" stroke-width="1.15"/>
<circle cx="306.00" cy="401.60" r="2.60" fill="none" stroke="#a87a48" stroke-width="1.15"/>
<circle cx="312.30" cy="401.60" r="2.60" fill="none" stroke="#a87a48" stroke-width="1.15"/>
<circle cx="318.70" cy="401.60" r="2.60" fill="none" stroke="#a87a48" stroke-width="1.15"/>
<circle cx="324.40" cy="322.90" r="2.20" fill="none" stroke="#a87a48" stroke-width="1.0"/>
<circle cx="324.40" cy="338.60" r="2.20" fill="none" stroke="#a87a48" stroke-width="1.0"/>
<circle cx="324.40" cy="344.50" r="2.20" fill="none" stroke="#a87a48" stroke-width="1.0"/>
<circle cx="324.40" cy="366.00" r="2.20" fill="none" stroke="#a87a48" stroke-width="1.0"/>
<circle cx="324.40" cy="386.20" r="2.20" fill="none" stroke="#a87a48" stroke-width="1.0"/>
<circle cx="324.40" cy="401.60" r="2.20" fill="none" stroke="#a87a48" stroke-width="1.0"/>
<rect x="303.00" y="323.00" width="6.00" height="2.00" fill="#e8e8e8" />
<rect x="309.50" y="325.60" width="6.50" height="2.00" fill="#e8e8e8" />
<rect x="323.50" y="326.00" width="5.50" height="2.00" fill="#e8e8e8" />
<rect x="303.00" y="339.40" width="6.00" height="2.00" fill="#e8e8e8" />
<rect x="309.50" y="349.40" width="7.00" height="2.00" fill="#e8e8e8" />
<rect x="303.00" y="359.00" width="6.00" height="2.00" fill="#e8e8e8" />
<rect x="309.50" y="368.00" width="7.00" height="2.00" fill="#e8e8e8" />
<rect x="323.50" y="349.60" width="5.00" height="2.00" fill="#e8e8e8" />
<rect x="303.00" y="378.40" width="6.00" height="2.00" fill="#e8e8e8" />
<rect x="312.00" y="388.50" width="8.00" height="2.00" fill="#e8e8e8" />
<rect x="323.50" y="388.00" width="5.00" height="2.00" fill="#e8e8e8" />
<rect x="303.00" y="402.00" width="6.00" height="2.00" fill="#e8e8e8" />
<rect x="311.40" y="329.50" width="2.20" height="2.20" fill="#30e030" />
<rect x="324.90" y="329.90" width="2.20" height="2.20" fill="#30e030" />
<rect x="344.90" y="330.30" width="2.20" height="2.20" fill="#30e030" />
<rect x="311.40" y="350.90" width="2.20" height="2.20" fill="#30e030" />
<rect x="324.90" y="351.30" width="2.20" height="2.20" fill="#30e030" />
<rect x="344.90" y="349.90" width="2.20" height="2.20" fill="#30e030" />
<rect x="314.40" y="371.50" width="2.20" height="2.20" fill="#30e030" />
<rect x="346.70" y="382.30" width="2.20" height="2.20" fill="#30e030" />
<rect x="312.00" y="393.00" width="6.00" height="1.60" fill="#e8d838" />
<rect x="320.00" y="392.60" width="4.00" height="2.20" fill="#e8d838" />
<path d="M333,321 L356,321 L356,328.6 L333,328.6 Z" fill="none" stroke="#c9c9c9" stroke-width="0.7" />
<path d="M333,321 L333,366 M341.5,328.6 L341.5,366 M333,345.5 l8.5,0 M333,366 l8.5,0" fill="none" stroke="#a87a48" stroke-width="0.8" />
<rect x="335.50" y="350.00" width="5.00" height="12.60" fill="none" stroke="#a87a48" stroke-width="0.8" />
<rect x="343.40" y="341.40" width="5.60" height="6.00" fill="none" stroke="#c9c9c9" stroke-width="0.6" />
<rect x="341.00" y="322.00" width="4.60" height="3.00" fill="#e8e8e8" />
<rect x="348.00" y="323.40" width="3.60" height="2.20" fill="#e8e8e8" />
<rect x="343.40" y="326.60" width="4.60" height="1.80" fill="#e8e8e8" />
<rect x="334.60" y="336.60" width="4.20" height="2.60" fill="#e8e8e8" />
<rect x="342.60" y="344.00" width="3.60" height="2.00" fill="#e8e8e8" />
<rect x="328.60" y="352.60" width="1.80" height="4.40" fill="#e8e8e8" />
<path d="M353.6,331.6 L360.4,331.6 L360.4,351 L356.4,351" fill="none" stroke="#c4be48" stroke-width="0.9" />
<path d="M356.4,331.6 L356.4,351" fill="none" stroke="#c9c9c9" stroke-width="0.6" />
<path d="M350,351 L360.4,351 L360.4,369 L350,369 Z" fill="none" stroke="#c9c9c9" stroke-width="0.7" />
<path d="M340.5,369 L340.5,408 M340.5,370.6 L359.4,370.6 M358,370.6 L358,408" fill="none" stroke="#b4ae62" stroke-width="0.9" />
<path d="M340.2,398.2 L358,398.2" fill="none" stroke="#c86428" stroke-width="1.3" />
<path d="M341.6,372 L341.6,388" fill="none" stroke="#c86428" stroke-width="0.8" />
<path d="M344,376 l0,14 M353.6,372 l0,12" fill="none" stroke="#30a060" stroke-width="0.8" />
<rect x="350.40" y="384.20" width="6.20" height="12.80" fill="#58d8c0" />
<circle cx="353.50" cy="388.00" r="1.40" fill="none" stroke="#186858" stroke-width="0.7"/>
<circle cx="354.00" cy="403.40" r="2.00" fill="none" stroke="#40d0c0" stroke-width="1.0"/>
<rect x="343.60" y="371.40" width="4.40" height="2.00" fill="#e8e8e8" />
<rect x="345.60" y="379.60" width="4.40" height="1.80" fill="#e8e8e8" />
<rect x="347.00" y="381.60" width="2.20" height="2.20" fill="#30e030" />
<rect x="338.00" y="388.00" width="2.20" height="4.00" fill="#e8e8e8" />
<rect x="338.00" y="401.00" width="2.20" height="3.40" fill="#e8e8e8" />
<rect x="338.00" y="373.60" width="2.20" height="3.00" fill="#e8e8e8" />
<path d="M335.4,394.6 l2.2,1.2 l1.4,2.4" fill="none" stroke="#e8e8e8" stroke-width="0.9" />
<rect x="360.60" y="400.00" width="11.00" height="1.70" fill="#e8e8e8" />
<rect x="360.60" y="402.60" width="11.00" height="1.70" fill="#e8e8e8" />
<line x1="349.00" y1="403.60" x2="360.00" y2="403.60" stroke="#c02020" stroke-width="0.5" />
<line x1="300.60" y1="407.60" x2="358.00" y2="407.60" stroke="#88a048" stroke-width="1.0" />
<rect x="303.60" y="408.20" width="59.40" height="18.20" fill="none" stroke="#a82020" stroke-width="0.9" />
<rect x="310.00" y="409.80" width="27.60" height="2.20" fill="#e8e8e8" />
<rect x="310.00" y="413.20" width="23.00" height="2.20" fill="#e8e8e8" />
<rect x="310.00" y="416.60" width="27.60" height="2.20" fill="#e8e8e8" />
<rect x="310.00" y="420.00" width="24.60" height="2.20" fill="#e8e8e8" />
<rect x="343.60" y="410.40" width="15.00" height="2.50" fill="#e8e8e8" />
<rect x="343.60" y="413.80" width="15.00" height="2.80" fill="#e8e8e8" />
<text x="370.60" y="426.00" font-size="3.4" fill="#e8e8e8" font-family="'Liberation Sans', sans-serif" textLength="10.00" lengthAdjust="spacingAndGlyphs" font-weight="bold" >PLAN</text>
<rect x="396.60" y="283.60" width="25.80" height="13.00" fill="url(#wood)" />
<rect x="422.80" y="283.60" width="11.00" height="8.00" fill="url(#wood)" />
<line x1="422.60" y1="283.60" x2="422.60" y2="296.00" stroke="#8a6238" stroke-width="0.5" />
<rect x="387.00" y="299.40" width="51.00" height="56.60" fill="none" stroke="#e8e8e8" stroke-width="0.9" />
<text x="388.40" y="303.80" font-size="3" fill="#e8e8e8" font-family="'Liberation Sans', sans-serif" textLength="47.00" lengthAdjust="spacingAndGlyphs" font-weight="bold" >ZEMIN TESVIYE KAPLAMA ORNEGI</text>
<text x="388.40" y="308.60" font-size="3" fill="#e8e8e8" font-family="'Liberation Sans', sans-serif" textLength="21.00" lengthAdjust="spacingAndGlyphs" font-weight="bold" >SELE BANDI</text>
<rect x="422.80" y="314.40" width="12.60" height="41.00" fill="none" stroke="#c4be48" stroke-width="0.9" />
<rect x="396.00" y="314.80" width="26.80" height="40.20" fill="url(#wood)" />
<rect x="396.00" y="334.20" width="26.80" height="8.00" fill="#4a7cae" />
<line x1="396.00" y1="332.20" x2="422.80" y2="332.20" stroke="#c83030" stroke-width="1.1" stroke-dasharray="1.3,1"/>
<line x1="396.00" y1="343.00" x2="422.80" y2="343.00" stroke="#d8c890" stroke-width="0.6" />
<rect x="423.60" y="314.80" width="10.80" height="8.60" fill="url(#wood)" />
<rect x="410.60" y="310.80" width="6.00" height="2.20" fill="#e8e8e8" />
<line x1="394.00" y1="313.00" x2="394.00" y2="356.00" stroke="#e8e8e8" stroke-width="0.5" />
<line x1="390.00" y1="313.60" x2="395.60" y2="313.60" stroke="#e8e8e8" stroke-width="0.5" />
<rect x="393.00" y="320.60" width="2.40" height="2.40" fill="#e8e8e8" />
<rect x="393.00" y="325.60" width="2.40" height="2.40" fill="#e8e8e8" />
<rect x="393.00" y="333.00" width="2.40" height="2.40" fill="#e8e8e8" />
<rect x="393.00" y="340.60" width="2.40" height="2.40" fill="#e8e8e8" />
<rect x="393.00" y="348.60" width="2.40" height="2.40" fill="#e8e8e8" />
<rect x="389.60" y="325.00" width="2.60" height="4.00" fill="#e8e8e8" />
<rect x="387.60" y="332.60" width="2.60" height="4.00" fill="#e8e8e8" />
<rect x="390.60" y="340.00" width="2.60" height="3.40" fill="#e8e8e8" />
<line x1="392.00" y1="333.40" x2="433.00" y2="333.40" stroke="#c9c9c9" stroke-width="0.5" />
<rect x="424.60" y="325.60" width="5.00" height="1.80" fill="#e8e8e8" />
<rect x="425.60" y="329.00" width="3.00" height="3.60" fill="#e8e8e8" />
<rect x="426.60" y="336.40" width="7.00" height="1.60" fill="#e8e8e8" />
<rect x="417.40" y="328.60" width="3.60" height="2.60" fill="#e8e8e8" />
<rect x="441.80" y="317.80" width="72.80" height="38.00" fill="none" stroke="#e8e8e8" stroke-width="0.9" />
<text x="443.00" y="322.20" font-size="3" fill="#e8e8e8" font-family="'Liberation Sans', sans-serif" textLength="56.00" lengthAdjust="spacingAndGlyphs" font-weight="bold" >ZEMIN SERAMIGI VE ALT TESVIYE ORNEK</text>
<text x="443.00" y="326.00" font-size="2.8" fill="#e8e8e8" font-family="'Liberation Sans', sans-serif" textLength="10.00" lengthAdjust="spacingAndGlyphs" font-weight="bold" >DETAYI</text>
<rect x="445.60" y="326.40" width="13.20" height="19.20" fill="none" stroke="#d8d8d8" stroke-width="0.8" />
<rect x="446.60" y="327.40" width="11.20" height="17.20" fill="url(#wood)" />
<rect x="451.00" y="332.00" width="2.40" height="2.40" fill="#e8e8e8" />
<rect x="450.60" y="338.60" width="3.40" height="3.40" fill="#e8e8e8" />
<rect x="445.60" y="347.60" width="14.00" height="5.20" fill="none" stroke="#a67c52" stroke-width="0.8" />
<rect x="448.60" y="349.00" width="7.60" height="2.20" fill="#e8e8e8" />
<rect x="451.60" y="345.60" width="1.60" height="2.00" fill="#e8e8e8" />
<rect x="463.60" y="326.40" width="7.00" height="18.80" fill="none" stroke="#e8e8e8" stroke-width="0.8" />
<line x1="463.60" y1="334.60" x2="470.60" y2="334.60" stroke="#e8e8e8" stroke-width="0.7" />
<line x1="463.60" y1="337.60" x2="470.60" y2="337.60" stroke="#e8e8e8" stroke-width="0.7" />
<rect x="461.20" y="328.60" width="1.60" height="2.20" fill="#e8e8e8" />
<rect x="461.20" y="337.60" width="1.60" height="2.20" fill="#e8e8e8" />
<rect x="464.40" y="346.40" width="5.60" height="1.60" fill="#e8e8e8" />
<rect x="473.20" y="326.40" width="5.80" height="18.80" fill="none" stroke="#d8d8d8" stroke-width="0.6" />
<rect x="474.00" y="327.00" width="4.30" height="17.80" fill="url(#wood)" />
<rect x="474.60" y="337.60" width="3.20" height="2.60" fill="#e8e8e8" />
<rect x="473.20" y="346.40" width="6.00" height="1.60" fill="#e8e8e8" />
<rect x="485.60" y="326.80" width="12.80" height="18.20" fill="none" stroke="#e8e8e8" stroke-width="0.9" rx="1" />
<line x1="485.60" y1="333.40" x2="498.40" y2="333.40" stroke="#e8e8e8" stroke-width="0.7" />
<rect x="486.60" y="335.40" width="11.00" height="9.00" fill="url(#wood)" />
<line x1="492.00" y1="335.00" x2="492.00" y2="345.00" stroke="#e8e8e8" stroke-width="0.6" />
<rect x="487.60" y="338.60" width="3.40" height="2.60" fill="#e8e8e8" />
<rect x="493.60" y="338.60" width="3.40" height="2.60" fill="#e8e8e8" />
<line x1="486.00" y1="342.00" x2="498.00" y2="342.00" stroke="#e8e8e8" stroke-width="0.5" />
<rect x="482.20" y="337.60" width="1.60" height="2.60" fill="#e8e8e8" />
<rect x="500.00" y="334.60" width="1.60" height="2.60" fill="#e8e8e8" />
<rect x="487.60" y="346.20" width="5.00" height="1.50" fill="#e8e8e8" />
<rect x="506.60" y="326.60" width="5.20" height="18.60" fill="url(#wood)" />
<rect x="504.60" y="346.40" width="8.00" height="1.70" fill="#e8e8e8" />
<rect x="507.40" y="337.00" width="3.40" height="2.60" fill="#e0d0b8" />
<rect x="524.80" y="314.80" width="21.80" height="13.20" fill="none" stroke="#a88a70" stroke-width="0.9" />
<rect x="526.60" y="315.80" width="18.00" height="3.60" fill="none" stroke="#e8e8e8" stroke-width="0.6" />
<rect x="532.00" y="320.40" width="6.00" height="4.60" fill="#e8e8e8" />
<path d="M522.6,328 L522.6,348.8 L533,348.8 L533,328" fill="none" stroke="#e8e8e8" stroke-width="0.8" />
<line x1="526.00" y1="329.00" x2="526.00" y2="348.00" stroke="#a88a70" stroke-width="0.6" />
<line x1="522.60" y1="341.40" x2="533.00" y2="341.40" stroke="#a88a70" stroke-width="0.6" />
<rect x="526.60" y="335.60" width="5.00" height="3.40" fill="#e8e8e8" />
<rect x="533.40" y="341.40" width="9.20" height="8.80" fill="none" stroke="#e8e8e8" stroke-width="0.8" rx="1.4" />
<rect x="535.00" y="343.00" width="6.00" height="4.40" fill="none" stroke="#c9c9c9" stroke-width="0.5" />
<rect x="524.80" y="348.80" width="7.00" height="11.00" fill="none" stroke="#a88a70" stroke-width="0.9" />
<rect x="527.40" y="351.60" width="1.80" height="5.60" fill="#c9c9c9" />
<rect x="399.00" y="361.00" width="11.60" height="12.00" fill="none" stroke="#8f8f36" stroke-width="1.0" />
<path d="M399,361 A11,12 0 0 0 388,373 L399,373" fill="none" stroke="#8f8f36" stroke-width="1.0" />
<line x1="388.00" y1="367.00" x2="410.60" y2="367.00" stroke="#8f8f36" stroke-width="0.6" opacity="0.0" />
<rect x="401.00" y="363.60" width="5.40" height="2.20" fill="#e8e8e8" />
<line x1="394.00" y1="372.00" x2="394.00" y2="383.40" stroke="#48c8b0" stroke-width="1.2" />
<rect x="407.00" y="381.60" width="10.60" height="18.00" fill="none" stroke="#8f8f36" stroke-width="1.0" />
<line x1="399.00" y1="390.60" x2="418.40" y2="390.60" stroke="#8f8f36" stroke-width="0.9" />
<path d="M399.6,381.6 L407,381.6 M399.6,381.6 A8.5,9 0 0 1 407,390.6" fill="none" stroke="#8f8f36" stroke-width="1.0" />
<path d="M399.6,399.6 L407,399.6 M399.6,399.6 A8.5,9 0 0 0 407,390.6" fill="none" stroke="#8f8f36" stroke-width="1.0" />
<rect x="409.60" y="385.00" width="5.00" height="2.80" fill="#e8e8e8" />
<rect x="410.00" y="393.60" width="5.00" height="2.60" fill="#e8e8e8" />
<rect x="413.00" y="388.60" width="5.00" height="1.30" fill="#e8e8e8" />
<rect x="437.20" y="394.40" width="12.20" height="38.60" fill="none" stroke="#e8e8e8" stroke-width="0.8" />
<rect x="433.00" y="414.20" width="8.60" height="18.80" fill="none" stroke="#e8e8e8" stroke-width="0.8" />
<line x1="442.20" y1="394.40" x2="442.20" y2="414.00" stroke="#8f8f36" stroke-width="1.1" />
<line x1="423.00" y1="432.20" x2="437.20" y2="432.20" stroke="#8f8f36" stroke-width="1.0" />
<line x1="433.00" y1="433.00" x2="450.00" y2="433.00" stroke="#e8e8e8" stroke-width="0.6" />
<path d="M435.6,391.6 l8,0 M439.6,389.6 l0,4" fill="none" stroke="#e8e8e8" stroke-width="0.6" />
<rect x="437.60" y="388.60" width="4.00" height="1.80" fill="#e8e8e8" />
<rect x="438.20" y="401.60" width="2.20" height="5.00" fill="#e8e8e8" />
<rect x="446.00" y="410.00" width="2.40" height="5.60" fill="#e8e8e8" />
<rect x="434.60" y="420.00" width="2.20" height="5.00" fill="#e8e8e8" />
<rect x="468.60" y="382.20" width="11.40" height="17.20" fill="none" stroke="#5f7e9e" stroke-width="1.1" rx="0.8" />
<rect x="472.00" y="390.00" width="5.40" height="2.00" fill="#e8e8e8" />
<rect x="472.00" y="393.00" width="4.60" height="2.40" fill="#e8e8e8" />
<rect x="464.40" y="419.00" width="12.40" height="10.00" fill="none" stroke="#8f8f36" stroke-width="1.0" />
<path d="M476.8,406.6 L476.8,419 M476.8,406.6 A12.4,12.6 0 0 0 464.4,419" fill="none" stroke="#8f8f36" stroke-width="1.0" />
<line x1="470.60" y1="408.60" x2="470.60" y2="429.00" stroke="#8f8f36" stroke-width="0.7" opacity="0.6" />
<rect x="466.80" y="420.40" width="2.40" height="5.00" fill="#e8e8e8" />
<rect x="478.60" y="422.60" width="5.00" height="2.00" fill="#e8e8e8" />
<rect x="478.60" y="425.60" width="4.20" height="2.40" fill="#e8e8e8" />
<path d="M467.6,440 A8.6,8 0 0 1 484.4,440" fill="none" stroke="#5f7e9e" stroke-width="1.0" />
<path d="M470.6,440 A5.6,5.4 0 0 1 481.6,440" fill="none" stroke="#e8e8e8" stroke-width="0.7" />
<rect x="472.40" y="433.60" width="1.80" height="3.00" fill="#e0b080" />
<rect x="478.00" y="433.60" width="1.80" height="3.00" fill="#e0b080" />
<rect x="653.00" y="232.00" width="10.00" height="30.40" fill="#a8c034" stroke="#c4a060" stroke-width="0.9" />
<rect x="656.60" y="235.70" width="2.80" height="21.90" fill="#161616" />
<rect x="684.00" y="232.00" width="9.60" height="30.40" fill="url(#wood)" />
<rect x="687.20" y="235.70" width="3.20" height="22.60" fill="#161616" />
<rect x="700.60" y="239.70" width="7.60" height="25.10" fill="#8fc022" />
<line x1="686.00" y1="219.00" x2="686.00" y2="232.00" stroke="#e8e8e8" stroke-width="0.7" />
<path d="M685,216.4 l8,0 l0,2.4 l-1.4,1.6 l-6.6,0 Z" fill="#e8e8e8" />
<path d="M690.6,232 L690.6,225.2 L697,225.2" fill="none" stroke="#e8e8e8" stroke-width="0.7" />
<path d="M697,225.6 l1.6,-3 l6.6,0 l-1,1.6 l-4.6,1 Z" fill="#e8e8e8" />
<rect x="687.80" y="262.40" width="2.40" height="10.40" fill="#d0d0d0" />
<line x1="680.40" y1="260.60" x2="680.40" y2="273.00" stroke="#30c030" stroke-width="0.7" />
<path d="M678.8,263 l1.6,-2.2 l1.6,2.2 Z" fill="#30e030" />
<path d="M678.8,267.6 l1.6,-2.2 l1.6,2.2 Z" fill="#30e030" />
<path d="M678.8,272.6 l1.6,-2.2 l1.6,2.2 Z" fill="#30e030" />
<rect x="683.00" y="269.00" width="1.60" height="1.60" fill="#30e030" />
<rect x="603.30" y="284.00" width="39.90" height="62.30" fill="none" stroke="#bcbc40" stroke-width="1.2" rx="7" />
<line x1="623.40" y1="284.00" x2="623.40" y2="346.30" stroke="#bcbc40" stroke-width="1.2" />
<rect x="703.70" y="295.40" width="37.60" height="47.60" fill="none" stroke="#bcbc40" stroke-width="1.2" />
<rect x="754.00" y="287.70" width="26.00" height="17.00" fill="none" stroke="#bcbc40" stroke-width="1.2" />
<rect x="780.60" y="333.20" width="6.80" height="6.80" fill="none" stroke="#bcbc40" stroke-width="1.2" />
<rect x="719.80" y="356.60" width="7.20" height="6.60" fill="none" stroke="#bcbc40" stroke-width="1.2" />
<rect x="712.20" y="367.80" width="15.80" height="37.20" fill="none" stroke="#bcbc40" stroke-width="1.2" />
<line x1="0.00" y1="283.35" x2="500.20" y2="283.35" stroke="#c0c0c0" stroke-width="1.0" />
<line x1="510.80" y1="283.35" x2="880.00" y2="283.35" stroke="#c0c0c0" stroke-width="1.0" />
<line x1="505.50" y1="92.00" x2="505.50" y2="278.00" stroke="#c0c0c0" stroke-width="1.0" />
<line x1="505.50" y1="288.60" x2="505.50" y2="440.00" stroke="#c0c0c0" stroke-width="1.0" />
<rect x="500.30" y="278.10" width="10.40" height="10.40" fill="none" stroke="#c6c63a" stroke-width="1.0" />
<rect x="6.40" y="427.30" width="6.20" height="6.20" fill="none" stroke="#b4b4b4" stroke-width="1.0" />
<line x1="9.50" y1="401.20" x2="9.50" y2="427.30" stroke="#b4b4b4" stroke-width="1.1" />
<line x1="12.60" y1="430.50" x2="40.00" y2="430.50" stroke="#b4b4b4" stroke-width="1.1" />
<path d="M10.4,391 l3.9,4 l3.9,-4 M14.3,395 l0,4" fill="none" stroke="#b4b4b4" stroke-width="1.0" />
<path d="M42,422.4 l8,8 M50,422.4 l-8,8" fill="none" stroke="#b4b4b4" stroke-width="1.0" />
<circle cx="837.10" cy="132.20" r="25.00" fill="none" stroke="#484848" stroke-width="6.6"/>
<rect x="824.40" y="120.00" width="25.20" height="24.40" fill="#a9a9a9" stroke="#8a8a8a" stroke-width="0.6" />
<text x="837.10" y="134.60" font-size="6.2" fill="#3a3a3a" font-family="'Liberation Sans', sans-serif" textLength="11.00" lengthAdjust="spacingAndGlyphs" font-weight="bold" text-anchor="middle" >TOP</text>
<text x="837.10" y="109.20" font-size="10.5" fill="#dcdcdc" font-family="'Liberation Sans', sans-serif" font-weight="bold" text-anchor="middle" >N</text>
<text x="837.10" y="163.80" font-size="10.5" fill="#dcdcdc" font-family="'Liberation Sans', sans-serif" font-weight="bold" text-anchor="middle" >S</text>
<text x="809.20" y="136.00" font-size="10.5" fill="#dcdcdc" font-family="'Liberation Sans', sans-serif" font-weight="bold" text-anchor="middle" >W</text>
<text x="865.60" y="136.00" font-size="10.5" fill="#dcdcdc" font-family="'Liberation Sans', sans-serif" font-weight="bold" text-anchor="middle" >E</text>
<rect x="822.90" y="175.60" width="28.10" height="8.80" fill="#6c6c6c" rx="2" />
<text x="825.40" y="182.60" font-size="6.4" fill="#8e8e8e" font-family="'Liberation Sans', sans-serif" textLength="13.00" lengthAdjust="spacingAndGlyphs" >WCS</text>
<line x1="876.40" y1="92.00" x2="876.40" y2="440.00" stroke="#222" stroke-width="0.8" />
<rect x="879.40" y="96.00" width="0.60" height="344.00" fill="#d4d4d4" />
</g>
<rect x="0.00" y="439.60" width="880.00" height="2.20" fill="#a4a4a4" />
<rect x="0.00" y="441.60" width="880.00" height="29.00" fill="#bdbdbd" />
<rect x="0.00" y="468.80" width="880.00" height="1.50" fill="#a6a6a6" />
<rect x="0.00" y="442.00" width="13.60" height="41.00" fill="#5a5a5a" />
<rect x="0.00" y="442.00" width="13.60" height="5.00" fill="#7d7d7d" />
<path d="M4.2,451.5 l5,5 M9.2,451.5 l-5,5" fill="none" stroke="#e4e4e4" stroke-width="1.3" />
<path d="M9.6,471.6 L5.6,467.2" fill="none" stroke="#e8e8e8" stroke-width="1.8" stroke-linecap="round"/>
<circle cx="4.90" cy="466.20" r="2.10" fill="#e8e8e8"/>
<circle cx="4.00" cy="465.20" r="1.10" fill="#5a5a5a"/>
<text x="15.00" y="456.20" font-size="7.2" fill="#141414" font-family="'Liberation Mono', sans-serif" textLength="371.00" lengthAdjust="spacingAndGlyphs" >Automatic save to D:\AUTOCAD AUTOSAVE\001_METRAJ ORNEK PROJELER_1_14908_bbcb7e55.sv$ ...</text>
<text x="15.00" y="465.60" font-size="7.2" fill="#141414" font-family="'Liberation Mono', sans-serif" textLength="34.00" lengthAdjust="spacingAndGlyphs" >Command:</text>
<rect x="13.60" y="470.20" width="866.40" height="12.30" fill="#ececec" />
<rect x="13.60" y="470.20" width="866.40" height="0.80" fill="#f6f6f6" />
<rect x="17.00" y="472.20" width="9.50" height="8.50" fill="#cfcfcf" stroke="#b4b4b4" stroke-width="0.5" rx="1" />
<path d="M19,474.5 l2.6,2 l-2.6,2" fill="none" stroke="#555" stroke-width="0.9" />
<path d="M22.5,479.2 l2.5,0" fill="none" stroke="#555" stroke-width="0.8" />
<path d="M27.8,476 l3,0 l-1.5,1.8 Z" fill="#666" />
<text x="35.00" y="479.40" font-size="7.2" fill="#9a9a9a" font-family="'Liberation Mono', sans-serif" textLength="60.00" lengthAdjust="spacingAndGlyphs" font-style="italic" >Type a command</text>
<rect x="0.00" y="482.50" width="880.00" height="12.50" fill="#adadad" />
<rect x="465.60" y="482.50" width="416.00" height="12.50" fill="#e2e2e2" />
<rect x="464.00" y="482.50" width="416.00" height="0.80" fill="#c8c8c8" />
<path d="M6,482.5 L10,493 Q10.6,494.6 12.5,494.6 L38,494.6 Q40,494.6 40.8,493 L44.5,482.5 Z" fill="#e6e6e6" />
<text x="13.20" y="491.60" font-size="7.4" fill="#0a0a0a" font-family="'Liberation Sans', sans-serif" textLength="21.50" lengthAdjust="spacingAndGlyphs" font-weight="bold" >Model</text>
<path d="M44.5,482.5 L48,493 Q48.6,494.6 50.5,494.6 L77,494.6 Q79,494.6 79.8,493 L83.5,482.5 Z" fill="#cdcdcd" />
<text x="49.00" y="491.40" font-size="7.2" fill="#8c8c8c" font-family="'Liberation Sans', sans-serif" textLength="25.00" lengthAdjust="spacingAndGlyphs" >Layout1</text>
<path d="M83.5,482.5 L87,493 Q87.6,494.6 89.5,494.6 L116,494.6 Q118,494.6 118.8,493 L122.5,482.5 Z" fill="#cdcdcd" />
<text x="88.50" y="491.40" font-size="7.2" fill="#8c8c8c" font-family="'Liberation Sans', sans-serif" textLength="25.00" lengthAdjust="spacingAndGlyphs" >Layout2</text>
<path d="M121.5,494.6 L125,485.5 Q125.6,484 127.5,484 L134.5,484 Q136.4,484 136.4,486 L136.4,494.6 Z" fill="#d4d4d4" />
<path d="M127.5,489.3 l5,0 M130,486.8 l0,5" fill="none" stroke="#333" stroke-width="1.1" />
<text x="470.00" y="492.60" font-size="7.2" fill="#1a1a1a" font-family="'Liberation Sans', sans-serif" textLength="24.00" lengthAdjust="spacingAndGlyphs" >MODEL</text>
<line x1="501.50" y1="485.50" x2="501.50" y2="494.00" stroke="#555" stroke-width="0.5" />
<line x1="500.00" y1="487.00" x2="509.00" y2="487.00" stroke="#555" stroke-width="0.5" />
<line x1="503.30" y1="485.50" x2="503.30" y2="494.00" stroke="#555" stroke-width="0.5" />
<line x1="500.00" y1="488.80" x2="509.00" y2="488.80" stroke="#555" stroke-width="0.5" />
<line x1="505.10" y1="485.50" x2="505.10" y2="494.00" stroke="#555" stroke-width="0.5" />
<line x1="500.00" y1="490.60" x2="509.00" y2="490.60" stroke="#555" stroke-width="0.5" />
<line x1="506.90" y1="485.50" x2="506.90" y2="494.00" stroke="#555" stroke-width="0.5" />
<line x1="500.00" y1="492.40" x2="509.00" y2="492.40" stroke="#555" stroke-width="0.5" />
<rect x="516.50" y="487.00" width="0.90" height="0.90" fill="#555" />
<rect x="516.50" y="489.40" width="0.90" height="0.90" fill="#555" />
<rect x="516.50" y="491.80" width="0.90" height="0.90" fill="#555" />
<rect x="518.90" y="487.00" width="0.90" height="0.90" fill="#555" />
<rect x="518.90" y="489.40" width="0.90" height="0.90" fill="#555" />
<rect x="518.90" y="491.80" width="0.90" height="0.90" fill="#555" />
<rect x="521.30" y="487.00" width="0.90" height="0.90" fill="#555" />
<rect x="521.30" y="489.40" width="0.90" height="0.90" fill="#555" />
<rect x="521.30" y="491.80" width="0.90" height="0.90" fill="#555" />
<path d="M529.8,490 l3.4,0 l-1.7,2 Z" fill="#222" />
<path d="M540.6,487 l0,8 M540.6,491.5 l3,0" fill="none" stroke="#666" stroke-width="0.8" />
<circle cx="558.00" cy="490.50" r="3.00" fill="none" stroke="#777" stroke-width="0.8"/>
<path d="M558,490.5 l3.5,-3" fill="none" stroke="#777" stroke-width="0.7" />
<path d="M569.8,490 l3.4,0 l-1.7,2 Z" fill="#222" />
<path d="M579,485.5 l7,9" fill="none" stroke="#c03030" stroke-width="0.9" />
<path d="M586,485.5 l-7,9" fill="none" stroke="#888" stroke-width="0.6" />
<path d="M592.8,490 l3.4,0 l-1.7,2 Z" fill="#222" />
<rect x="600.50" y="484.20" width="13.50" height="11.00" fill="#b7d3ee" stroke="#5a8fc8" stroke-width="0.7" />
<path d="M603,493.5 l8,-6.5" fill="none" stroke="#444" stroke-width="0.9" />
<rect x="615.00" y="484.20" width="13.50" height="11.00" fill="#b7d3ee" stroke="#5a8fc8" stroke-width="0.7" />
<path d="M618,494 l0,-6.5 l7,0 l0,3" fill="none" stroke="#444" stroke-width="0.8" />
<path d="M630.8,490 l3.4,0 l-1.7,2 Z" fill="#222" />
<line x1="640.00" y1="486.50" x2="649.00" y2="486.50" stroke="#555" stroke-width="0.5" />
<line x1="640.00" y1="488.70" x2="649.00" y2="488.70" stroke="#555" stroke-width="0.8" />
<line x1="640.00" y1="490.90" x2="649.00" y2="490.90" stroke="#555" stroke-width="0.5" />
<line x1="640.00" y1="493.10" x2="649.00" y2="493.10" stroke="#555" stroke-width="0.8" />
<rect x="655.50" y="484.20" width="13.50" height="11.00" fill="#b7d3ee" stroke="#5a8fc8" stroke-width="0.7" />
<path d="M659,494.5 l3.5,-9 l3.5,9 M660.5,490.5 l4,0" fill="none" stroke="#333" stroke-width="0.9" />
<path d="M675,494.5 l3.2,-8.5 l3.2,8.5 M676.3,490.8 l3.8,0" fill="none" stroke="#444" stroke-width="0.9" />
<path d="M688.5,494.5 l3.2,-8.5 l3.2,8.5" fill="none" stroke="#444" stroke-width="0.9" />
<text x="699.00" y="493.60" font-size="6.4" fill="#333" font-family="'Liberation Sans', sans-serif" >1:1</text>
<path d="M710.3,490 l3.4,0 l-1.7,2 Z" fill="#222" />
<circle cx="722.00" cy="491.00" r="3.00" fill="none" stroke="#555" stroke-width="1.2"/>
<path d="M730.3,490 l3.4,0 l-1.7,2 Z" fill="#222" />
<path d="M740,491 l7,0 M743.5,487.5 l0,7" fill="none" stroke="#555" stroke-width="1.0" />
<rect x="754.00" y="487.00" width="5.00" height="6.00" fill="none" stroke="#666" stroke-width="0.8" />
<path d="M763.3,490 l3.4,0 l-1.7,2 Z" fill="#222" />
<circle cx="776.00" cy="491.00" r="2.60" fill="none" stroke="#666" stroke-width="0.9"/>
<path d="M779,488 l2,-2" fill="none" stroke="#666" stroke-width="0.9" />
<rect x="790.00" y="486.00" width="7.00" height="8.00" fill="#8ab4dc" stroke="#4a78a8" stroke-width="0.7" />
<rect x="806.00" y="487.00" width="6.00" height="7.00" fill="#e8c040" stroke="#888" stroke-width="0.6" />
<rect x="809.00" y="489.00" width="5.00" height="5.00" fill="#58a0d8" />
<rect x="824.00" y="488.00" width="6.00" height="6.00" fill="none" stroke="#666" stroke-width="0.9" />
<circle cx="830.00" cy="489.00" r="1.60" fill="#c04040"/>
<rect x="842.00" y="488.00" width="7.00" height="6.00" fill="none" stroke="#555" stroke-width="0.9" />
<rect x="856.00" y="487.60" width="7.00" height="7.00" fill="none" stroke="#555" stroke-width="0.9" />
<line x1="869.00" y1="488.00" x2="877.00" y2="488.00" stroke="#444" stroke-width="1.0" />
<line x1="869.00" y1="490.40" x2="877.00" y2="490.40" stroke="#444" stroke-width="1.0" />
<line x1="869.00" y1="492.80" x2="877.00" y2="492.80" stroke="#444" stroke-width="1.0" />
<circle cx="664.70" cy="465.50" r="13.20" fill="#f4f0fa" opacity="0.35"/>
<circle cx="664.70" cy="465.50" r="13.20" fill="none" stroke="#6a3aa8" stroke-width="1.2"/>
<clipPath id="shield"><path d="M657.7,456.7 L671.3,455.2 L675.4,463.7 L672.8,472.3 L664.7,476.9 L655.2,469.8 Z"/></clipPath>
<path d="M657.7,456.7 L671.3,455.2 L675.4,463.7 L672.8,472.3 L664.7,476.9 L655.2,469.8 Z" fill="#4636b4" />
<g clip-path="url(#shield)"><line x1="650.00" y1="452.40" x2="680.00" y2="460.40" stroke="#e4e0f6" stroke-width="0.75" /><line x1="650.00" y1="455.40" x2="680.00" y2="463.40" stroke="#e4e0f6" stroke-width="0.75" /><line x1="650.00" y1="458.40" x2="680.00" y2="466.40" stroke="#e4e0f6" stroke-width="0.75" /><line x1="650.00" y1="461.40" x2="680.00" y2="469.40" stroke="#e4e0f6" stroke-width="0.75" /><line x1="650.00" y1="464.40" x2="680.00" y2="472.40" stroke="#e4e0f6" stroke-width="0.75" /><line x1="650.00" y1="467.40" x2="680.00" y2="475.40" stroke="#e4e0f6" stroke-width="0.75" /><line x1="650.00" y1="470.40" x2="680.00" y2="478.40" stroke="#e4e0f6" stroke-width="0.75" /><line x1="650.00" y1="473.40" x2="680.00" y2="481.40" stroke="#e4e0f6" stroke-width="0.75" /><line x1="650.00" y1="476.40" x2="680.00" y2="484.40" stroke="#e4e0f6" stroke-width="0.75" /></g>
<text x="681.60" y="472.30" font-size="18.4" fill="#6f60bc" font-family="'Liberation Sans', sans-serif" textLength="62.00" lengthAdjust="spacingAndGlyphs" font-weight="bold" >FORMS</text>
<rect x="701.00" y="439.00" width="173.40" height="49.30" fill="#f6f6f6" rx="5.4" opacity="0.94" />
<path d="M730.41,460.16 A10.2,10.2 0 1 1 730.41,447.04" fill="none" stroke="#161616" stroke-width="2.0" />
<path d="M755.19,453.96 A10.2,10.2 0 1 1 752.58,446.77 M755.4,454.2 L745.4,454.2" fill="none" stroke="#161616" stroke-width="2.0" />
<path d="M772.26,461.31 A7.0,7.0 0 1 1 773.60,457.20 M773.6,457.2 L759.6,457.2" fill="none" stroke="#161616" stroke-width="2.0" />
<path d="M779.8,449.6 L779.8,464.8 M779.8,455 Q780.4,450.4 786.6,450.4" fill="none" stroke="#161616" stroke-width="2.0" />
<rect x="791.20" y="462.20" width="2.60" height="2.60" fill="#161616" />
<path d="M811.60,461.88 A7.0,7.0 0 1 1 811.60,452.52" fill="none" stroke="#161616" stroke-width="2.0" />
<circle cx="824.80" cy="457.20" r="7.00" fill="none" stroke="#161616" stroke-width="2.0"/>
<path d="M838.6,449.6 L838.6,464.8 M838.6,455.6 Q838.8,450.4 844.6,450.4 Q850.6,450.4 850.6,455.6 L850.6,464.8 M850.6,455.6 Q850.8,450.4 856.6,450.4 Q862.6,450.4 862.6,455.6 L862.6,464.8" fill="none" stroke="#161616" stroke-width="2.0" />
<path d="M737.35,480.75 A4.9,4.9 0 1 1 737.35,474.45" fill="none" stroke="#454545" stroke-width="1.2" /><path d="M749.89,477.94 A4.9,4.9 0 1 1 748.64,474.32 M750.00,478.0 L745.40,478.0" fill="none" stroke="#454545" stroke-width="1.2" />
<path d="M800.35,480.75 A4.9,4.9 0 1 1 800.35,474.45" fill="none" stroke="#454545" stroke-width="1.2" /><path d="M812.89,477.94 A4.9,4.9 0 1 1 811.64,474.32 M813.00,478.0 L808.40,478.0" fill="none" stroke="#454545" stroke-width="1.2" />
<g transform="translate(752.80,470.40) scale(1.0)"><path d="M1.5,1.5 L3,2.6 M0.8,6.2 L3.4,4 M7,0.4 L5,3.6 M6.4,2 L12.6,2 L11.6,3.6 M9.2,2.6 Q8.6,5.4 5.6,6.6 M9.2,3.6 Q10.4,5.6 13.2,6.6 M3.6,11.6 L3.6,7.6 L10.6,7.6 L10.6,11.6 M7.1,8.6 L7.1,11 Q6.4,12.6 2.8,13.6 M8.4,11.6 L12.2,13.6" fill="none" stroke="#454545" stroke-width="1.15" stroke-linecap="round" stroke-linejoin="round"/></g>
<g transform="translate(768.60,470.40) scale(1.06)"><path d="M1,1.5 L2.6,2.6 M0.5,5 L2.1,6.1 M0.5,13.2 L2.6,9.4 M4.2,1.5 L13.6,1.5 M4.7,1.5 Q4.9,9 3.3,13.6 M8.8,2.4 L8.2,4 M6.5,4 L12.1,4 L12.1,8.5 L6.5,8.5 Z M6.5,6.2 L12.1,6.2 M9.3,8.5 L9.3,13.4 L8.3,12.8 M7.1,10 L6,12.6 M11.5,10 L12.9,12.6" fill="none" stroke="#454545" stroke-width="1.15" stroke-linecap="round" stroke-linejoin="round"/></g>
<g transform="translate(816.60,470.40) scale(1.02)"><path d="M1.5,13.6 L1.5,1.5 L12.5,1.5 L12.5,13.4 L11,12.8 M3.6,4 L6.6,11 M6.6,4 Q5.6,8.6 3,11 M7.9,4 L10.9,11 M10.9,4 Q9.9,8.6 7.4,11" fill="none" stroke="#454545" stroke-width="1.15" stroke-linecap="round" stroke-linejoin="round"/></g>
<g transform="translate(832.60,470.40) scale(1.0)"><path d="M3,0.5 L3.6,2.1 M0.8,3.6 L6.1,3.6 M2,5.6 L2.8,10 M5.1,5.6 L4.1,10 M0.4,11.6 L6.6,10.5 M9.6,0.5 L9.6,6.6 M9.6,3.6 L13.6,3.6 M7.6,13.2 L7.6,6.6 L12.6,6.6 L12.6,13.2 M7.6,12.2 L12.6,12.2" fill="none" stroke="#454545" stroke-width="1.15" stroke-linecap="round" stroke-linejoin="round"/></g></g>
</svg>
</body></html>
